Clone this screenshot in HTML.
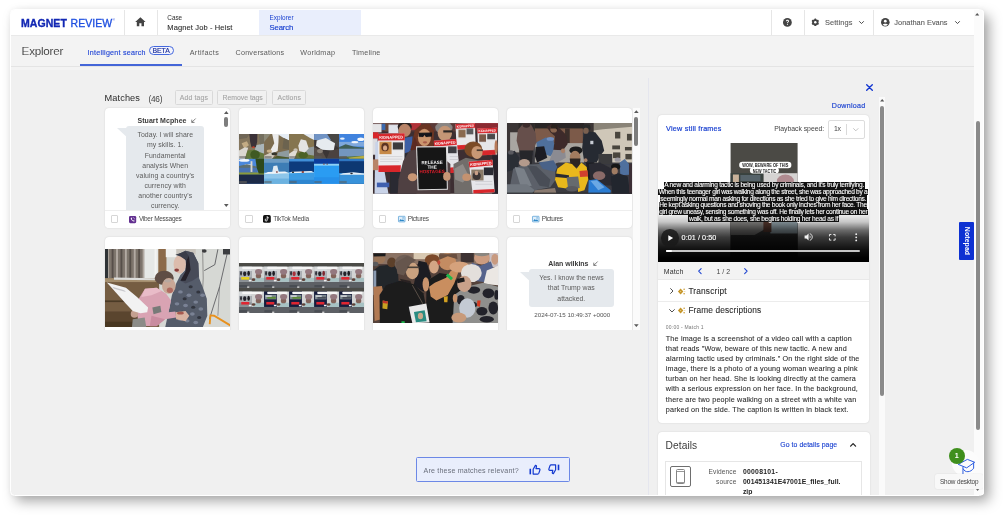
<!DOCTYPE html>
<html lang="en"><head><meta charset="utf-8"><title>Magnet Review - Explorer Search</title>
<style>
html,body{margin:0;padding:0}
body{background:#fff;width:1005px;height:517px;overflow:hidden;position:relative;font-family:"Liberation Sans",sans-serif}
#win{position:absolute;left:10.5px;top:9.5px;width:973.0px;height:485.8px;background:#f0f0f0;border-radius:3px;overflow:hidden;z-index:2}
#shadow{position:absolute;left:10.5px;top:9.5px;width:973.0px;height:485.8px;border-radius:3px;background:#fff;box-shadow:5px 6px 13px rgba(0,0,0,.36),0 0 6px rgba(0,0,0,.06);z-index:1}
#org{will-change:transform;position:absolute;left:-10.5px;top:-9.5px;width:1005px;height:517px}
.t{position:absolute;white-space:nowrap;margin:0;padding:0}
.b{position:absolute;box-sizing:border-box}
.card{position:absolute;box-sizing:border-box;background:#fff;border-radius:4px;box-shadow:0 0 1.5px rgba(0,0,0,.18);overflow:hidden}
svg{position:absolute;overflow:visible}
.clip{position:absolute;overflow:hidden}
#rim{position:absolute;left:9.5px;top:8.5px;width:974.9px;height:487.7px;box-sizing:border-box;border:1.6px solid #fff;border-radius:4.5px;z-index:3;pointer-events:none}

</style></head>
<body>
<div id="shadow"></div>
<div id="win"><div id="org">
<div class="b" style="left:10.50px;top:9.50px;width:973.50px;height:26.50px;background:#fff;border-bottom:1px solid #e9e9e9"></div>
<div class="b" style="left:123.90px;top:9.50px;width:1.00px;height:25.50px;background:#e6e6e6"></div>
<div class="b" style="left:156.50px;top:9.50px;width:1.00px;height:25.50px;background:#e6e6e6"></div>
<div class="b" style="left:770.70px;top:9.50px;width:1.00px;height:25.50px;background:#e6e6e6"></div>
<div class="b" style="left:803.60px;top:9.50px;width:1.00px;height:25.50px;background:#e6e6e6"></div>
<div class="b" style="left:873.00px;top:9.50px;width:1.00px;height:25.50px;background:#e6e6e6"></div>
<div class="b" style="left:259.20px;top:9.50px;width:101.90px;height:25.50px;background:#e9eefc"></div>
<svg style="left:134.60px;top:17.00px;" width="10.80" height="9.60" viewBox="0 0 24 21"><path d="M12 0.5 L0.5 11 H4 V20.5 H9.6 V13.6 H14.4 V20.5 H20 V11 H23.5 Z" fill="#444"/></svg>
<svg style="left:782.90px;top:18.10px;" width="8.80" height="8.80" viewBox="0 0 20 20"><circle cx="10" cy="10" r="10" fill="#444"/><path d="M6.6 7.6 C6.6 5.4 8.1 4.2 10.1 4.2 C12.1 4.2 13.5 5.4 13.5 7.2 C13.5 9.6 10.9 9.7 10.9 12.2 H9.1 C9.1 9.2 11.5 9 11.5 7.3 C11.5 6.5 10.9 6 10.1 6 C9.2 6 8.6 6.6 8.6 7.6 Z" fill="#fff"/><circle cx="10" cy="14.8" r="1.25" fill="#fff"/></svg>
<svg style="left:810.80px;top:18.30px;" width="8.60" height="8.60" viewBox="0 0 20 20"><rect x="7.9" y="1.2" width="4.2" height="17.6" rx="0.9" transform="rotate(0 10 10)" fill="#444"/><rect x="7.9" y="1.2" width="4.2" height="17.6" rx="0.9" transform="rotate(60 10 10)" fill="#444"/><rect x="7.9" y="1.2" width="4.2" height="17.6" rx="0.9" transform="rotate(120 10 10)" fill="#444"/><circle cx="10" cy="10" r="7.2" fill="#444"/><circle cx="10" cy="10" r="2.9" fill="#fff"/></svg>
<svg style="left:859.40px;top:21.10px;" width="5.00" height="3.10" viewBox="0 0 10 6"><path d="M1 1 L5 5 L9 1" fill="none" stroke="#4a4a4a" stroke-width="2" stroke-linecap="round" stroke-linejoin="round"/></svg>
<svg style="left:880.50px;top:18.30px;" width="8.60" height="8.60" viewBox="0 0 20 20"><circle cx="10" cy="10" r="10" fill="#444"/><circle cx="10" cy="7.4" r="3.2" fill="#fff"/><path d="M4 15.2 C5.6 12.4 14.4 12.4 16 15.2 C14.4 17.2 12.4 18 10 18 C7.6 18 5.6 17.2 4 15.2 Z" fill="#fff"/></svg>
<svg style="left:954.50px;top:21.10px;" width="5.00" height="3.10" viewBox="0 0 10 6"><path d="M1 1 L5 5 L9 1" fill="none" stroke="#4a4a4a" stroke-width="2" stroke-linecap="round" stroke-linejoin="round"/></svg>
<div class="b" style="left:10.50px;top:36.00px;width:963.70px;height:30.90px;background:#f3f3f3;border-bottom:1px solid #e4e4e4"></div>
<div class="b" style="left:148.50px;top:45.50px;width:25.30px;height:9.90px;border:0.9px solid #4468de;border-radius:5px;background:#f3f4fc"></div>
<div class="b" style="left:79.80px;top:64.00px;width:101.80px;height:2.00px;background:#4466d8"></div>
<div class="b" style="left:10.50px;top:66.90px;width:963.70px;height:2.70px;background:#f3f3f3"></div>
<div class="b" style="left:648.20px;top:77.50px;width:1.00px;height:418.50px;background:#e5e6ee"></div>
<div class="b" style="left:878.70px;top:96.50px;width:6.60px;height:399.50px;background:#fafafa"></div>
<div class="b" style="left:879.70px;top:106.00px;width:4.20px;height:290.20px;background:#8a8a8a;border-radius:2.2px"></div>
<svg style="left:879.60px;top:99.20px;" width="4.40" height="2.60" viewBox="0 0 8 5"><path d="M0 5 L4 0 L8 5 Z" fill="#555"/></svg>
<div class="b" style="left:974.20px;top:9.50px;width:9.80px;height:486.50px;background:#fbfbfb"></div>
<div class="b" style="left:976.00px;top:120.60px;width:4.00px;height:309.70px;background:#8a8a8a;border-radius:2px"></div>
<svg style="left:975.40px;top:13.40px;" width="4.40" height="2.60" viewBox="0 0 8 5"><path d="M0 5 L4 0 L8 5 Z" fill="#555"/></svg>
<div class="b" style="left:959.00px;top:222.20px;width:15.20px;height:37.70px;background:#0d31d2;border-radius:1px"></div>
<span class="t" style="left:966.6px;top:241.2px;font-size:6.9px;line-height:8px;color:#fff;font-weight:700;transform:translate(-50%,-50%) rotate(90deg);letter-spacing:0.1px">Notepad</span>
<div class="b" style="left:174.50px;top:90.40px;width:38.40px;height:15.00px;border:1px solid #d9d9d9;border-radius:1.5px;background:#f1f1f1"></div>
<div class="b" style="left:217.20px;top:90.40px;width:50.20px;height:15.00px;border:1px solid #d9d9d9;border-radius:1.5px;background:#f1f1f1"></div>
<div class="b" style="left:272.40px;top:90.40px;width:33.40px;height:15.00px;border:1px solid #d9d9d9;border-radius:1.5px;background:#f1f1f1"></div>
<div class="card" style="left:104.60px;top:107.90px;width:125.30px;height:120.10px;"></div>
<div class="card" style="left:104.60px;top:236.80px;width:125.30px;height:105.20px;"></div>
<div class="card" style="left:238.90px;top:107.90px;width:125.40px;height:120.10px;"></div>
<div class="card" style="left:238.90px;top:236.80px;width:125.40px;height:105.20px;"></div>
<div class="card" style="left:372.70px;top:107.90px;width:125.70px;height:120.10px;"></div>
<div class="card" style="left:372.70px;top:236.80px;width:125.70px;height:105.20px;"></div>
<div class="card" style="left:506.70px;top:107.90px;width:125.40px;height:120.10px;"></div>
<div class="card" style="left:506.70px;top:236.80px;width:125.40px;height:105.20px;"></div>
<svg style="left:239.00px;top:134.20px;overflow:hidden" width="125.10" height="49.70" viewBox="0 0 125.10 49.70"><defs><filter id="fA" x="-5%" y="-5%" width="110%" height="110%"><feGaussianBlur stdDeviation="0.6"/></filter></defs><g filter="url(#fA)"><rect x="0.00" y="0.00" width="25.10" height="24.97" fill="#85765d" /><polygon points="0.00,0.00 10.51,0.00 7.88,3.94 0.00,5.26" fill="#6f6656" /><polygon points="2.63,9.20 7.88,7.23 9.86,11.17 5.26,14.45" fill="#c3ab84" /><polygon points="16.43,11.17 25.10,9.46 25.10,19.71 15.77,19.71" fill="#aab5b9" /><polygon points="19.71,0.00 25.10,0.00 25.10,9.20 21.02,10.51" fill="#75705f" /><polygon points="0.00,16.43 5.91,13.14 9.20,13.80 5.91,24.97 0.00,24.97" fill="#dbd8d2" /><polygon points="5.91,24.97 8.54,16.43 14.45,15.77 25.10,19.71 25.10,24.97" fill="#62783a" /><ellipse cx="16.03" cy="20.76" rx="4.73" ry="4.47" fill="#3f5a22" /><polygon points="10.25,0.00 18.40,0.00 18.13,7.88 16.82,13.14 12.48,13.14 11.17,7.88" fill="#3a3137" /><ellipse cx="14.45" cy="13.14" rx="1.31" ry="0.92" fill="#c8402a" /><rect x="25.02" y="0.00" width="25.10" height="24.97" fill="#7c6c50" /><polygon points="38.16,0.00 50.12,0.00 50.12,6.57 44.73,3.94" fill="#e6edf5" /><polygon points="44.73,3.94 50.12,6.57 50.12,15.77 43.42,14.45" fill="#6c6350" /><polygon points="25.02,0.00 31.59,0.00 25.02,7.88" fill="#8d8a78" /><polygon points="38.82,18.40 50.12,16.03 50.12,23.39 37.50,23.92" fill="#8e9b9e" /><polygon points="25.02,21.68 31.59,18.40 36.85,19.71 32.90,24.97 25.02,24.97" fill="#cfc9bc" /><polygon points="32.90,24.97 38.16,21.68 50.12,23.39 50.12,24.97" fill="#4f5a2c" /><polygon points="33.17,0.00 39.74,0.00 39.47,7.88 38.69,17.08 32.90,19.71 31.59,15.77 35.27,9.20" fill="#ececec" /><ellipse cx="35.27" cy="19.71" rx="2.89" ry="1.58" fill="#34342c" /><ellipse cx="30.28" cy="17.08" rx="2.63" ry="1.58" fill="#c9b088" /><rect x="50.04" y="0.00" width="25.10" height="24.97" fill="#85744f" /><polygon points="64.49,0.00 75.14,0.00 75.14,5.91 71.06,3.94" fill="#e4ebf4" /><polygon points="64.49,14.45 75.14,12.48 75.14,21.68 63.18,22.34" fill="#939c9e" /><polygon points="50.04,19.71 55.95,15.77 58.58,16.43 55.30,24.97 50.04,24.97" fill="#e0dcd4" /><polygon points="55.30,24.97 58.19,18.40 75.14,21.68 75.14,24.97" fill="#667034" /><ellipse cx="64.23" cy="21.02" rx="4.73" ry="3.68" fill="#4c6226" /><polygon points="61.87,5.26 67.12,6.57 69.75,14.45 65.81,18.40 60.29,17.08 59.24,11.83" fill="#e3e3e3" /><ellipse cx="56.61" cy="15.77" rx="2.10" ry="1.58" fill="#c9c2b4" /><rect x="75.06" y="0.00" width="25.10" height="24.97" fill="#3b3634" /><polygon points="75.06,0.00 100.16,0.00 100.16,6.57 75.06,5.91" fill="#6f93c4" /><polygon points="88.20,0.00 100.16,0.00 100.16,14.45 94.77,10.51" fill="#4a4644" /><polygon points="77.69,6.57 86.89,3.94 96.08,9.20 94.77,16.43 82.94,15.77 77.03,11.83" fill="#e6ebef" /><polygon points="75.06,13.14 82.94,16.43 87.54,24.97 75.06,24.97" fill="#59504a" /><polygon points="87.54,24.97 90.83,17.08 100.16,14.45 100.16,24.97" fill="#4b433f" /><ellipse cx="80.97" cy="17.08" rx="2.89" ry="2.10" fill="#8a8178" /><rect x="100.08" y="0.00" width="25.10" height="24.97" fill="#3f83de" /><rect x="100.08" y="7.88" width="25.10" height="4.60" fill="#7fa8dc" /><ellipse cx="121.76" cy="5.26" rx="3.42" ry="1.84" fill="#f4f7fb" /><ellipse cx="103.36" cy="4.60" rx="2.37" ry="1.18" fill="#e8effa" /><ellipse cx="115.85" cy="8.15" rx="3.42" ry="1.05" fill="#f0f4fa" /><polygon points="100.08,13.14 106.65,10.25 114.53,12.48 125.18,13.80 125.18,17.08 100.08,15.51" fill="#3f5f57" /><rect x="100.08" y="14.72" width="25.10" height="8.28" fill="#7396bf" /><polygon points="100.08,23.00 125.18,21.68 125.18,24.97 100.08,24.97" fill="#55713a" /><polygon points="109.28,23.65 125.18,21.68 125.18,24.97 110.59,24.97" fill="#b7ae42" /><rect x="100.08" y="22.60" width="7.88" height="2.37" fill="#5d5f50" /><rect x="0.00" y="24.84" width="25.10" height="24.97" fill="#4b88dc" /><ellipse cx="5.26" cy="26.41" rx="5.26" ry="1.31" fill="#f4f7fb" /><ellipse cx="9.20" cy="31.41" rx="3.94" ry="1.05" fill="#eaf1fb" /><polygon points="0.00,32.06 7.88,30.35 18.40,32.72 18.40,35.35 0.00,35.35" fill="#5e6f70" /><rect x="0.00" y="33.77" width="18.40" height="5.26" fill="#4a73b2" /><rect x="0.00" y="38.50" width="25.10" height="2.37" fill="#8b9b3c" /><rect x="0.00" y="40.60" width="25.10" height="9.20" fill="#1c2a46" /><rect x="11.56" y="27.20" width="1.84" height="10.78" fill="#d8d5cc" /><polygon points="16.43,24.84 25.10,24.84 25.10,39.55 19.71,39.55 17.74,34.03" fill="#2e4a1c" /><rect x="0.00" y="47.17" width="7.88" height="2.63" fill="#39404e" /><rect x="25.02" y="24.84" width="25.10" height="24.97" fill="#3d7db5" /><rect x="25.02" y="24.84" width="25.10" height="3.94" fill="#6d9cc4" /><rect x="25.02" y="38.63" width="25.10" height="11.17" fill="#8dc6ea" /><rect x="25.02" y="44.55" width="25.10" height="5.26" fill="#6cb2e0" /><polygon points="34.48,32.06 38.16,31.41 40.13,39.29 32.90,39.55" fill="#dfeaf2" /><polygon points="28.96,37.98 46.04,37.45 50.12,39.29 25.02,40.08" fill="#eef4f8" /><ellipse cx="37.90" cy="37.98" rx="1.05" ry="0.79" fill="#7a3030" /><rect x="50.04" y="24.84" width="25.10" height="24.97" fill="#0f3b7c" /><rect x="50.04" y="24.84" width="25.10" height="2.63" fill="#3f8fd8" /><rect x="50.04" y="37.98" width="25.10" height="11.83" fill="#3a9be4" /><rect x="50.04" y="45.86" width="25.10" height="3.94" fill="#2d86d0" /><polygon points="52.67,37.71 72.38,36.93 75.14,38.50 50.04,39.29" fill="#e8f0f6" /><ellipse cx="63.84" cy="37.98" rx="1.31" ry="0.92" fill="#8a3a32" /><ellipse cx="53.98" cy="38.24" rx="1.18" ry="0.79" fill="#202020" /><rect x="75.06" y="24.84" width="25.10" height="24.97" fill="#2c9cf2" /><rect x="75.06" y="24.84" width="25.10" height="4.99" fill="#0c3d9c" /><rect x="75.06" y="29.83" width="25.10" height="1.84" fill="#8ed0f4" /><rect x="75.06" y="43.23" width="25.10" height="6.57" fill="#2890ea" /><ellipse cx="84.91" cy="30.09" rx="1.05" ry="0.53" fill="#8a4034" /><ellipse cx="88.20" cy="30.09" rx="0.79" ry="0.53" fill="#6a3030" /><rect x="100.08" y="24.84" width="25.10" height="24.97" fill="#0d3772" /><rect x="100.08" y="24.84" width="25.10" height="2.37" fill="#2f77c2" /><rect x="100.08" y="39.03" width="25.10" height="10.78" fill="#3792da" /><polygon points="104.02,39.29 114.53,38.24 125.18,39.55 125.18,40.87 100.08,40.87" fill="#e4edf4" /><ellipse cx="112.56" cy="39.55" rx="1.31" ry="0.79" fill="#2a2a30" /><rect x="0.26" y="22.08" width="7.36" height="2.37" fill="#5a5a5a" opacity="0.55"/><rect x="0.26" y="46.91" width="7.36" height="2.37" fill="#5a5a5a" opacity="0.55"/><rect x="25.28" y="22.08" width="7.36" height="2.37" fill="#5a5a5a" opacity="0.55"/><rect x="25.28" y="46.91" width="7.36" height="2.37" fill="#5a5a5a" opacity="0.55"/><rect x="50.30" y="22.08" width="7.36" height="2.37" fill="#5a5a5a" opacity="0.55"/><rect x="50.30" y="46.91" width="7.36" height="2.37" fill="#5a5a5a" opacity="0.55"/><rect x="75.32" y="22.08" width="7.36" height="2.37" fill="#5a5a5a" opacity="0.55"/><rect x="75.32" y="46.91" width="7.36" height="2.37" fill="#5a5a5a" opacity="0.55"/><rect x="100.34" y="22.08" width="7.36" height="2.37" fill="#5a5a5a" opacity="0.55"/><rect x="100.34" y="46.91" width="7.36" height="2.37" fill="#5a5a5a" opacity="0.55"/></g></svg>
<svg style="left:373.10px;top:123.40px;overflow:hidden" width="124.90" height="70.50" viewBox="0 0 124.90 70.50"><defs><filter id="fB" x="-5%" y="-5%" width="110%" height="110%"><feGaussianBlur stdDeviation="0.4"/></filter></defs><g filter="url(#fB)"><rect x="0.00" y="0.00" width="125.39" height="70.74" fill="#3c2f30" /><rect x="0.00" y="0.00" width="125.39" height="8.51" fill="#5a3a38" /><rect x="34.06" y="0.00" width="13.93" height="6.97" fill="#b03038" /><rect x="97.52" y="0.00" width="27.86" height="6.19" fill="#8a2a30" /><ellipse cx="13.93" cy="3.87" rx="4.33" ry="4.64" fill="#6a4638" /><rect x="8.51" y="0.77" width="3.87" height="6.19" fill="#3a6ab0" /><rect x="0.00" y="0.77" width="8.51" height="8.51" fill="#e4e4e6" /><rect x="0.00" y="9.29" width="5.42" height="6.19" fill="#d8262c" /><rect x="0.00" y="15.48" width="4.64" height="16.25" fill="#dcdce0" /><rect x="15.48" y="1.55" width="10.06" height="8.51" fill="#dfe2ea" /><ellipse cx="31.73" cy="3.87" rx="7.12" ry="5.57" fill="#2a2220" /><ellipse cx="31.73" cy="7.28" rx="6.19" ry="6.50" fill="#b98468" /><polygon points="31.73,14.71 39.47,13.16 39.47,27.86 31.73,30.19" fill="#3c5fa4" /><rect x="17.03" y="30.19" width="26.32" height="40.56" fill="#2c2a30" /><polygon points="2.32,19.35 6.19,17.80 15.48,70.74 1.55,70.74" fill="#c9d3e8" /><rect x="3.87" y="59.60" width="12.38" height="4.64" fill="#3f5fae" /><rect x="0.00" y="36.38" width="6.19" height="10.84" fill="#b88468" /><polygon points="4.95,10.84 31.73,10.37 31.27,48.76 5.42,49.07" fill="#ececee" /><polygon points="4.95,10.84 31.73,10.37 31.73,17.18 4.95,17.49" fill="#d8262c" /><rect x="6.50" y="18.73" width="12.07" height="12.38" fill="#c78a48" /><ellipse cx="12.07" cy="23.99" rx="3.72" ry="4.33" fill="#5a3220" /><ellipse cx="12.07" cy="24.92" rx="2.17" ry="2.63" fill="#d9a888" /><rect x="19.81" y="19.35" width="10.22" height="7.12" fill="#3a3a3c" /><rect x="7.12" y="33.28" width="22.29" height="0.62" fill="#c8c8cc" /><rect x="7.12" y="35.76" width="22.29" height="0.62" fill="#c8c8cc" /><rect x="7.12" y="38.24" width="19.20" height="0.62" fill="#c8c8cc" /><polygon points="5.42,42.57 27.86,42.26 27.55,49.07 5.42,49.07" fill="#d8262c" /><ellipse cx="70.90" cy="4.80" rx="8.67" ry="6.19" fill="#8a8684" /><ellipse cx="71.83" cy="10.37" rx="7.12" ry="7.74" fill="#c49676" /><rect x="70.28" y="7.28" width="9.29" height="2.17" fill="#2a2424" /><polygon points="63.47,17.80 80.50,16.25 83.59,25.54 63.47,25.54" fill="#2c2628" /><polygon points="82.51,1.08 101.86,0.15 102.79,25.54 83.59,26.47" fill="#e8e8ea" /><polygon points="82.51,1.08 101.86,0.15 102.17,4.80 82.82,5.73" fill="#d8262c" /><rect x="85.45" y="6.66" width="7.12" height="7.74" fill="#8a6a50" /><rect x="93.50" y="5.42" width="6.81" height="5.88" fill="#5a5a5c" /><polygon points="83.90,22.14 102.48,21.21 102.79,25.54 84.06,26.47" fill="#d8262c" /><polygon points="104.33,5.42 124.15,4.80 124.15,31.73 105.26,32.35" fill="#e6e6e8" /><polygon points="104.33,5.42 124.15,4.80 124.15,9.75 104.49,10.37" fill="#d8262c" /><rect x="106.19" y="11.30" width="6.81" height="7.43" fill="#7a5a48" /><rect x="114.24" y="10.68" width="7.74" height="5.57" fill="#4a4a4c" /><polygon points="108.36,27.40 122.60,26.78 122.60,31.73 108.67,32.35" fill="#d8262c" /><ellipse cx="123.07" cy="23.99" rx="1.55" ry="6.97" fill="#b87a58" /><polygon points="60.68,17.80 83.59,15.94 86.69,49.07 63.78,50.31" fill="#e4e4e8" /><polygon points="60.37,17.80 83.28,15.94 83.90,21.83 60.99,23.68" fill="#d8262c" /><rect x="75.08" y="23.37" width="8.51" height="6.81" fill="#3e3e42" /><rect x="76.63" y="33.28" width="8.51" height="0.62" fill="#c0c0c6" /><rect x="76.63" y="36.07" width="8.82" height="0.62" fill="#c0c0c6" /><polygon points="75.08,44.74 86.38,43.81 86.69,49.38 75.39,50.31" fill="#d8262c" /><rect x="80.50" y="43.50" width="4.02" height="3.41" fill="#8ab0b8" /><polygon points="41.80,6.97 47.99,1.55 56.50,1.08 61.15,7.74 60.37,23.99 55.73,30.19 43.34,30.96 37.46,27.09" fill="#6a3424" /><polygon points="37.46,27.09 41.80,13.16 46.44,27.09 43.34,34.83" fill="#5c2c20" /><ellipse cx="51.39" cy="14.40" rx="6.50" ry="8.67" fill="#cc966e" /><polygon points="45.51,9.75 59.13,9.44 58.82,13.47 52.94,14.09 51.39,11.92 50.15,14.09 45.82,13.78" fill="#16151a" /><ellipse cx="52.01" cy="19.35" rx="2.17" ry="1.08" fill="#a85a4a" /><polygon points="36.38,27.86 47.99,25.54 61.92,27.86 77.40,41.02 77.40,70.74 24.77,70.74 25.54,56.50 30.19,37.93" fill="#4f4042" /><polygon points="80.50,41.02 92.88,34.83 108.36,37.93 105.26,70.74 81.27,70.74" fill="#716d6b" /><polygon points="81.27,45.67 89.78,41.02 95.98,53.41 89.78,59.60 82.04,56.50" fill="#8f8b88" /><ellipse cx="100.31" cy="26.32" rx="8.98" ry="7.74" fill="#7b4b28" /><ellipse cx="104.02" cy="29.41" rx="5.57" ry="6.50" fill="#c99874" /><rect x="103.72" y="26.32" width="6.19" height="1.70" fill="#4a3a30" /><rect x="119.20" y="31.73" width="6.19" height="39.01" fill="#26242a" /><polygon points="95.67,38.70 119.50,36.69 121.67,69.20 99.69,70.43" fill="#e6e6ea" /><polygon points="95.67,38.70 119.50,36.69 119.81,42.26 96.28,44.43" fill="#d8262c" /><rect x="98.30" y="46.59" width="12.23" height="10.84" fill="#8a7a68" /><ellipse cx="103.72" cy="53.10" rx="4.02" ry="4.02" fill="#3a3436" /><ellipse cx="103.41" cy="50.00" rx="1.86" ry="2.17" fill="#c8a088" /><rect x="110.84" y="44.43" width="9.29" height="7.74" fill="#2c2c30" /><rect x="102.17" y="58.05" width="17.03" height="0.62" fill="#c4c4ca" /><rect x="102.48" y="60.84" width="17.03" height="0.62" fill="#c4c4ca" /><polygon points="100.31,67.03 121.36,66.10 121.67,69.20 100.31,70.43" fill="#d8262c" /><polygon points="43.03,23.37 73.99,23.07 74.92,66.72 44.58,67.34" fill="#dcdcdc" /><polygon points="44.12,24.46 72.91,24.15 73.84,65.63 45.67,66.25" fill="#121214" /><ellipse cx="39.47" cy="54.18" rx="4.64" ry="4.02" fill="#c89674" /><ellipse cx="73.84" cy="53.41" rx="3.72" ry="4.33" fill="#c89674" /><ellipse cx="93.65" cy="54.18" rx="4.33" ry="3.72" fill="#c49270" /><text x="59.13" y="41.02" font-size="4.8" font-weight="700" fill="#f2f2f2" text-anchor="middle" font-family="Liberation Sans, sans-serif" textLength="21.5" lengthAdjust="spacingAndGlyphs" transform="rotate(-1 59.13 41.02)">RELEASE</text><text x="59.13" y="45.67" font-size="4.8" font-weight="700" fill="#f2f2f2" text-anchor="middle" font-family="Liberation Sans, sans-serif" textLength="9.5" lengthAdjust="spacingAndGlyphs" transform="rotate(-1 59.13 45.67)">THE</text><text x="59.13" y="50.15" font-size="4.8" font-weight="700" fill="#e0202c" text-anchor="middle" font-family="Liberation Sans, sans-serif" textLength="25.5" lengthAdjust="spacingAndGlyphs" transform="rotate(-1 59.13 50.15)">HOSTAGES</text><text x="18.27" y="15.63" font-size="3.9" font-weight="700" fill="#fff" text-anchor="middle" font-family="Liberation Sans, sans-serif" textLength="24" lengthAdjust="spacingAndGlyphs" transform="rotate(-1 18.27 15.63)">KIDNAPPED</text><text x="72.14" y="21.21" font-size="3.7" font-weight="700" fill="#fff" text-anchor="middle" font-family="Liberation Sans, sans-serif" textLength="21" lengthAdjust="spacingAndGlyphs" transform="rotate(-4 72.14 21.21)">KIDNAPPED</text><text x="92.41" y="4.18" font-size="3.3" font-weight="700" fill="#fff" text-anchor="middle" font-family="Liberation Sans, sans-serif" textLength="17.5" lengthAdjust="spacingAndGlyphs" transform="rotate(-3 92.41 4.18)">KIDNAPPED</text><text x="114.24" y="8.82" font-size="3.3" font-weight="700" fill="#fff" text-anchor="middle" font-family="Liberation Sans, sans-serif" textLength="17.5" lengthAdjust="spacingAndGlyphs" transform="rotate(-2 114.24 8.82)">KIDNAPPED</text><text x="107.89" y="42.11" font-size="3.8" font-weight="700" fill="#fff" text-anchor="middle" font-family="Liberation Sans, sans-serif" textLength="21.5" lengthAdjust="spacingAndGlyphs" transform="rotate(-5 107.89 42.11)">KIDNAPPED</text></g></svg>
<svg style="left:507.10px;top:123.40px;overflow:hidden" width="124.90" height="70.50" viewBox="0 0 124.90 70.50"><defs><filter id="fC" x="-5%" y="-5%" width="110%" height="110%"><feGaussianBlur stdDeviation="0.55"/></filter></defs><g filter="url(#fC)"><rect x="0.00" y="0.00" width="125.39" height="70.74" fill="#3a3a40" /><rect x="0.00" y="0.00" width="12.38" height="30.19" fill="#3b3634" /><rect x="3.10" y="9.29" width="9.29" height="20.12" fill="#a9a6a2" /><rect x="11.61" y="0.00" width="18.58" height="11.61" fill="#2e2a2a" /><rect x="27.86" y="0.77" width="47.99" height="20.12" fill="#7c5a48" /><rect x="27.86" y="0.00" width="49.54" height="5.42" fill="#2c2726" /><rect x="58.05" y="5.42" width="4.64" height="14.71" fill="#3a2e2a" /><rect x="27.86" y="20.12" width="49.54" height="19.35" fill="#a8a49e" /><polygon points="85.91,5.42 125.39,0.77 125.39,39.47 86.69,39.47" fill="#cfc7b8" /><polygon points="83.59,0.00 125.39,0.00 125.39,3.87 95.98,6.19 84.37,7.74" fill="#8a8478" /><rect x="77.40" y="0.00" width="9.29" height="13.16" fill="#3a3634" /><rect x="108.05" y="8.82" width="5.26" height="6.66" fill="#4a443e" /><rect x="119.97" y="10.84" width="4.80" height="6.66" fill="#4a443e" /><rect x="105.26" y="22.45" width="7.74" height="3.87" fill="#4a443e" /><rect x="117.96" y="23.99" width="6.81" height="3.41" fill="#4a443e" /><rect x="106.04" y="29.41" width="7.28" height="5.73" fill="#4a443e" /><rect x="118.42" y="30.96" width="6.35" height="5.42" fill="#4a443e" /><rect x="87.46" y="14.71" width="2.32" height="3.10" fill="#5a544e" /><polygon points="10.84,6.97 15.48,1.55 23.99,1.55 28.64,10.06 29.41,19.35 26.32,27.86 12.38,27.86 9.60,17.80" fill="#66504b" /><ellipse cx="19.35" cy="2.32" rx="3.72" ry="2.48" fill="#3a2c2a" /><polygon points="12.38,27.40 26.01,27.40 24.77,41.02 13.93,41.02" fill="#26262a" /><polygon points="29.41,19.35 38.70,14.40 46.44,16.25 47.99,27.86 43.34,33.28 30.19,27.86" fill="#4f6f9c" /><ellipse cx="43.34" cy="15.94" rx="3.72" ry="1.86" fill="#6f8fc0" /><polygon points="28.64,23.99 37.15,23.22 40.25,34.83 30.19,39.47 27.86,33.28" fill="#1e1e22" /><polygon points="39.47,3.87 44.89,1.08 50.31,3.10 58.82,11.61 60.68,20.90 55.73,27.86 46.44,27.09 47.99,13.16 43.34,9.29" fill="#3d2c29" /><ellipse cx="46.75" cy="6.19" rx="3.41" ry="3.41" fill="#8a6650" /><polygon points="44.89,1.08 50.31,2.32 51.08,7.74 48.76,5.42 43.34,5.42" fill="#2a201e" /><polygon points="46.44,26.78 58.05,27.40 58.82,34.83 47.99,41.02 41.80,39.47" fill="#8b8b92" /><ellipse cx="56.04" cy="27.86" rx="2.17" ry="2.48" fill="#a88068" /><polygon points="76.63,11.61 80.50,8.51 88.24,9.29 94.74,17.80 97.21,27.86 92.88,33.28 89.78,39.47 77.40,39.47 75.08,25.54" fill="#272b33" /><ellipse cx="79.72" cy="4.64" rx="4.02" ry="3.41" fill="#2c2c2c" /><ellipse cx="78.95" cy="7.74" rx="2.79" ry="3.10" fill="#7a6050" /><rect x="83.28" y="17.80" width="3.10" height="3.41" fill="#c8ccd4" /><polygon points="78.95,39.16 87.46,39.16 86.69,56.50 80.50,56.50" fill="#1c1e24" /><ellipse cx="78.64" cy="37.15" rx="1.86" ry="1.86" fill="#a88068" /><rect x="91.33" y="30.96" width="13.93" height="10.06" fill="#3a3a3e" /><polygon points="0.00,29.41 7.74,27.86 12.38,34.83 10.84,45.67 0.00,48.76" fill="#2c2e36" /><ellipse cx="3.87" cy="29.41" rx="2.79" ry="2.17" fill="#5a5a60" /><polygon points="6.19,45.67 17.03,41.80 32.51,41.02 47.99,45.67 48.76,56.50 43.34,64.24 27.86,67.34 10.84,68.89 3.10,62.69" fill="#5b6169" /><polygon points="31.73,39.47 46.44,37.15 50.31,44.12 47.99,48.76 35.60,45.67" fill="#4a6288" /><ellipse cx="17.34" cy="39.78" rx="5.57" ry="3.72" fill="#b39a8c" /><polygon points="7.74,44.12 17.03,45.67 24.77,62.69 13.93,64.24" fill="#7a8088" /><polygon points="0.00,61.15 20.12,61.15 27.86,67.34 24.77,70.74 0.00,70.74" fill="#70767e" /><polygon points="27.86,67.34 47.99,65.02 49.54,70.74 26.32,70.74" fill="#8a7a70" /><polygon points="20.12,42.57 29.41,43.34 43.34,56.50 41.80,64.24 32.51,62.69" fill="#4a4e56" /><ellipse cx="68.89" cy="27.40" rx="6.50" ry="4.02" fill="#1c1a1a" /><ellipse cx="68.11" cy="34.06" rx="5.26" ry="6.19" fill="#a37c5e" /><polygon points="62.69,35.60 73.53,35.60 72.76,42.57 68.11,44.89 63.47,41.80" fill="#2e2624" /><polygon points="50.31,45.67 58.82,39.47 65.02,41.02 69.66,45.67 74.30,39.47 79.72,44.12 81.27,56.50 77.40,67.34 71.21,68.89 69.66,59.60 61.92,59.60 61.15,65.79 51.08,64.24 47.99,56.50" fill="#e9b81a" /><polygon points="48.76,50.62 61.92,52.17 61.92,55.26 48.30,54.02" fill="#2b2b33" /><polygon points="72.45,47.99 80.50,47.21 81.11,53.41 73.07,54.02" fill="#d2412e" /><polygon points="59.60,54.18 71.21,53.41 72.76,65.02 61.15,65.79" fill="#666a6e" /><ellipse cx="65.02" cy="65.79" rx="6.19" ry="2.79" fill="#5a5a5e" /><polygon points="82.04,41.02 92.88,39.47 105.26,45.67 105.26,62.69 83.59,61.15" fill="#2c2c32" /><ellipse cx="92.11" cy="52.63" rx="6.19" ry="4.33" fill="#8a6a68" /><ellipse cx="110.68" cy="36.69" rx="3.10" ry="2.17" fill="#9a98a0" /><polygon points="112.69,39.47 117.65,36.07 121.98,41.02 122.60,51.86 113.31,52.17" fill="#4f6f9e" /><ellipse cx="108.67" cy="43.81" rx="4.64" ry="3.10" fill="#161616" /><ellipse cx="107.74" cy="47.99" rx="3.10" ry="3.41" fill="#a07c64" /><polygon points="103.72,53.41 111.46,50.31 120.74,53.41 123.07,70.74 105.26,70.74" fill="#23262e" /><rect x="121.98" y="41.02" width="3.41" height="29.72" fill="#3a2e34" /><polygon points="81.73,57.28 89.78,56.19 103.72,67.34 103.72,70.74 81.27,70.74" fill="#2b7bd2" /><polygon points="83.59,58.05 89.78,57.28 97.52,64.24 91.33,67.34" fill="#6aa8e4" /><rect x="0.00" y="69.66" width="125.39" height="1.08" fill="#2a2a2e" /></g></svg>
<svg style="left:104.60px;top:248.80px;overflow:hidden" width="125.30" height="78.10" viewBox="0 0 125.30 78.10"><defs><filter id="fD" x="-5%" y="-5%" width="110%" height="110%"><feGaussianBlur stdDeviation="0.5"/></filter></defs><g filter="url(#fD)"><rect x="0.00" y="0.00" width="125.66" height="78.67" fill="#d6d8d4" /><rect x="0.00" y="0.00" width="40.01" height="29.29" fill="#7d746c" /><rect x="2.21" y="0.00" width="1.87" height="28.95" fill="#b2aaa2" /><rect x="6.64" y="0.00" width="1.87" height="28.95" fill="#57504a" /><rect x="11.07" y="0.00" width="1.87" height="28.95" fill="#b2aaa2" /><rect x="15.49" y="0.00" width="1.87" height="28.95" fill="#57504a" /><rect x="19.92" y="0.00" width="1.87" height="28.95" fill="#b2aaa2" /><rect x="24.35" y="0.00" width="1.87" height="28.95" fill="#57504a" /><rect x="28.78" y="0.00" width="1.87" height="28.95" fill="#b2aaa2" /><rect x="33.20" y="0.00" width="1.87" height="28.95" fill="#57504a" /><rect x="37.63" y="0.00" width="1.87" height="28.95" fill="#b2aaa2" /><rect x="0.00" y="0.00" width="3.06" height="29.29" fill="#2f3134" /><rect x="39.33" y="0.00" width="14.81" height="29.29" fill="#e6e8e6" /><rect x="49.55" y="0.00" width="2.04" height="29.29" fill="#f4f4f2" /><rect x="53.29" y="0.00" width="8.17" height="30.14" fill="#8c6b49" /><rect x="60.79" y="0.00" width="10.56" height="8.17" fill="#f0f0ee" /><rect x="71.34" y="0.00" width="19.41" height="5.45" fill="#c9c4bc" /><rect x="0.00" y="29.29" width="54.15" height="49.38" fill="#755d43" /><rect x="0.00" y="29.29" width="54.15" height="3.75" fill="#a48e6e" /><rect x="0.00" y="51.42" width="37.97" height="1.70" fill="#4c3a28" /><rect x="0.00" y="62.49" width="37.97" height="16.18" fill="#5a452f" /><rect x="0.00" y="72.71" width="37.97" height="5.96" fill="#493723" /><polygon points="9.02,28.61 49.89,29.29 49.89,31.33 9.02,30.65" fill="#dcdcda" /><polyline points="97.57,0.00 98.25,29.29 97.22,46.31" fill="none" stroke="#9a9a98" stroke-width="1.19" /><polyline points="112.89,0.34 109.82,15.66 99.27,21.62" fill="none" stroke="#34343a" stroke-width="0.68" /><polyline points="122.77,2.04 114.59,37.80 104.38,70.15" fill="none" stroke="#3a3a40" stroke-width="0.68" /><polyline points="114.59,37.80 112.89,66.75" fill="none" stroke="#55555a" stroke-width="0.51" /><rect x="118.00" y="0.00" width="7.66" height="5.45" fill="#3a3c40" /><ellipse cx="99.27" cy="2.04" rx="2.38" ry="1.70" fill="#3a3a3e" /><polygon points="72.88,5.45 80.54,1.70 88.20,3.75 93.31,13.96 94.16,29.29 97.57,37.80 101.82,49.72 102.33,66.75 97.57,78.67 60.11,78.67 63.51,63.34 66.92,46.31 71.17,34.39 75.43,25.88 80.54,20.77 80.20,10.56" fill="#545b6b" /><polygon points="72.88,5.45 80.54,1.70 88.20,3.75 93.31,13.96 93.82,27.58 87.35,31.84 80.54,34.39 75.43,31.84 80.54,22.48 81.39,11.41" fill="#474b59" /><polygon points="78.84,5.45 83.94,7.15 85.65,20.77 80.54,31.84 75.43,31.84 80.54,22.48 81.39,11.41" fill="#25222a" /><ellipse cx="74.75" cy="15.32" rx="6.13" ry="9.19" fill="#dcbcac" /><ellipse cx="71.68" cy="21.11" rx="2.38" ry="1.53" fill="#8a3a38" /><polygon points="70.32,5.79 80.54,2.38 83.94,7.15 81.39,11.41 75.43,7.49" fill="#3a3c48" /><ellipse cx="75.43" cy="42.91" rx="2.38" ry="1.70" fill="#7a8294" /><ellipse cx="83.94" cy="46.31" rx="2.38" ry="1.70" fill="#7a8294" /><ellipse cx="90.75" cy="53.12" rx="2.38" ry="1.70" fill="#7a8294" /><ellipse cx="80.54" cy="56.53" rx="2.38" ry="1.70" fill="#7a8294" /><ellipse cx="87.35" cy="65.04" rx="2.38" ry="1.70" fill="#7a8294" /><ellipse cx="95.86" cy="59.94" rx="2.38" ry="1.70" fill="#7a8294" /><ellipse cx="75.43" cy="70.15" rx="2.38" ry="1.70" fill="#7a8294" /><ellipse cx="90.75" cy="73.56" rx="2.38" ry="1.70" fill="#7a8294" /><ellipse cx="97.57" cy="46.31" rx="2.38" ry="1.70" fill="#7a8294" /><ellipse cx="72.02" cy="54.83" rx="2.38" ry="1.70" fill="#7a8294" /><ellipse cx="82.24" cy="71.85" rx="2.38" ry="1.70" fill="#7a8294" /><ellipse cx="79.69" cy="49.72" rx="2.04" ry="1.53" fill="#30343e" /><ellipse cx="88.20" cy="58.23" rx="2.04" ry="1.53" fill="#30343e" /><ellipse cx="94.16" cy="68.45" rx="2.04" ry="1.53" fill="#30343e" /><ellipse cx="77.13" cy="63.34" rx="2.04" ry="1.53" fill="#30343e" /><ellipse cx="85.65" cy="37.80" rx="2.04" ry="1.53" fill="#30343e" /><ellipse cx="93.31" cy="42.91" rx="2.04" ry="1.53" fill="#30343e" /><ellipse cx="59.25" cy="28.95" rx="9.54" ry="7.15" fill="#5f4e44" /><ellipse cx="63.85" cy="36.95" rx="6.81" ry="7.83" fill="#c9a796" /><ellipse cx="64.87" cy="41.21" rx="3.06" ry="2.72" fill="#b06a60" /><ellipse cx="62.66" cy="31.84" rx="3.41" ry="1.70" fill="#b8a8a0" /><polygon points="40.01,39.84 51.59,38.65 60.96,44.61 66.07,51.42 63.51,63.34 70.32,62.49 71.17,68.45 60.11,70.15 51.59,76.96 33.71,76.96 32.01,63.34 33.71,49.72" fill="#d9a3b3" /><polygon points="40.01,39.84 51.59,38.65 56.70,42.06 46.48,46.31 36.27,48.02" fill="#e9bcc8" /><polygon points="47.34,58.57 55.34,56.87 56.36,63.00 48.53,65.38" fill="#777a78" /><polygon points="46.48,66.75 60.11,70.15 51.59,77.30 44.78,77.30" fill="#c98ca0" /><polygon points="70.32,63.34 80.54,61.98 84.28,66.75 80.54,72.19 71.17,70.15" fill="#dab4a2" /><ellipse cx="75.43" cy="64.19" rx="3.41" ry="1.36" fill="#a85a50" /><polygon points="27.75,70.15 39.67,68.45 41.38,78.67 26.90,78.67" fill="#8c8c88" /><ellipse cx="29.46" cy="65.04" rx="3.75" ry="3.75" fill="#c4a090" /><polygon points="1.87,33.54 20.94,38.65 32.01,48.02 43.08,58.57 42.23,63.34 35.42,64.19 27.75,61.98 20.94,54.83" fill="#f2f2f2" /><polygon points="7.32,37.80 19.24,41.21 20.94,42.91 9.02,39.84" fill="#c8c8cc" /><polyline points="104.72,75.26 105.40,66.41 109.14,66.75 125.66,76.62" fill="none" stroke="#e8901c" stroke-width="1.87" /><rect x="99.27" y="75.26" width="5.11" height="3.41" fill="#d8d8d4" /></g></svg>
<svg style="left:239.00px;top:262.80px;overflow:hidden" width="125.10" height="50.00" viewBox="0 0 125.10 50.00"><defs><filter id="fE" x="-5%" y="-5%" width="110%" height="110%"><feGaussianBlur stdDeviation="0.4"/></filter></defs><g filter="url(#fE)"><rect x="-1.00" y="-0.70" width="130.01" height="52.00" fill="#5d6065" /><rect x="-1.00" y="-0.70" width="130.01" height="4.55" fill="#4b4b46" /><rect x="-1.00" y="24.86" width="130.01" height="3.90" fill="#4b4b46" /><rect x="0.09" y="3.63" width="12.78" height="15.17" fill="#aeb2b7" /><rect x="0.09" y="3.63" width="12.78" height="4.33" fill="#d9dcde" /><rect x="0.09" y="14.46" width="12.78" height="4.33" fill="#898e93" /><ellipse cx="2.04" cy="10.35" rx="0.98" ry="2.38" fill="#33323a" /><ellipse cx="5.72" cy="10.78" rx="1.63" ry="2.38" fill="#232229" /><ellipse cx="9.62" cy="10.35" rx="1.30" ry="2.60" fill="#1d1c22" /><rect x="2.25" y="14.03" width="8.02" height="2.60" fill="#e6d01c" /><rect x="12.87" y="3.63" width="12.24" height="15.17" fill="#d3d4d4" /><polygon points="13.95,18.80 14.82,15.33 18.29,14.25 25.11,14.90 25.11,18.80" fill="#a7c2c3" /><ellipse cx="19.48" cy="12.73" rx="2.71" ry="2.60" fill="#83635a" /><ellipse cx="19.59" cy="8.83" rx="3.58" ry="2.82" fill="#94787f" /><ellipse cx="14.50" cy="16.63" rx="1.84" ry="1.30" fill="#5f4238" /><rect x="3.12" y="3.85" width="20.37" height="2.17" fill="#f6f6f6" rx="1"/><rect x="0.30" y="22.05" width="8.02" height="2.17" fill="#4a4d52" /><rect x="8.10" y="23.56" width="2.17" height="1.08" fill="#f2f2f2" /><rect x="9.84" y="16.85" width="2.60" height="1.52" fill="#f0f0f0" /><rect x="25.11" y="3.63" width="12.78" height="15.17" fill="#aeb2b7" /><rect x="25.11" y="3.63" width="12.78" height="4.33" fill="#d9dcde" /><rect x="25.11" y="14.46" width="12.78" height="4.33" fill="#898e93" /><ellipse cx="27.06" cy="10.35" rx="0.98" ry="2.38" fill="#33323a" /><ellipse cx="30.75" cy="10.78" rx="1.63" ry="2.38" fill="#232229" /><ellipse cx="34.65" cy="10.35" rx="1.30" ry="2.60" fill="#1d1c22" /><rect x="27.28" y="14.03" width="8.02" height="2.60" fill="#df2830" /><rect x="37.90" y="3.63" width="12.24" height="15.17" fill="#d3d4d4" /><polygon points="38.98,18.80 39.85,15.33 43.32,14.25 50.14,14.90 50.14,18.80" fill="#a7c2c3" /><ellipse cx="44.51" cy="12.73" rx="2.71" ry="2.60" fill="#83635a" /><ellipse cx="44.62" cy="8.83" rx="3.58" ry="2.82" fill="#94787f" /><ellipse cx="39.52" cy="16.63" rx="1.84" ry="1.30" fill="#5f4238" /><rect x="28.15" y="3.85" width="20.37" height="2.17" fill="#f6f6f6" rx="1"/><rect x="25.33" y="22.05" width="8.02" height="2.17" fill="#4a4d52" /><rect x="33.13" y="23.56" width="2.17" height="1.08" fill="#f2f2f2" /><rect x="34.86" y="16.85" width="2.60" height="1.52" fill="#f0f0f0" /><rect x="50.14" y="3.63" width="12.78" height="15.17" fill="#aeb2b7" /><rect x="50.14" y="3.63" width="12.78" height="4.33" fill="#d9dcde" /><rect x="50.14" y="14.46" width="12.78" height="4.33" fill="#898e93" /><ellipse cx="52.09" cy="10.35" rx="0.98" ry="2.38" fill="#33323a" /><ellipse cx="55.12" cy="10.78" rx="1.63" ry="2.38" fill="#a8303a" /><ellipse cx="59.67" cy="10.35" rx="1.30" ry="2.60" fill="#1d1c22" /><rect x="52.31" y="14.03" width="8.02" height="2.60" fill="#df2830" /><rect x="62.93" y="3.63" width="12.24" height="15.17" fill="#d3d4d4" /><polygon points="64.01,18.80 64.88,15.33 68.34,14.25 75.17,14.90 75.17,18.80" fill="#a7c2c3" /><ellipse cx="69.53" cy="12.73" rx="2.71" ry="2.60" fill="#83635a" /><ellipse cx="69.64" cy="8.83" rx="3.58" ry="2.82" fill="#94787f" /><ellipse cx="64.55" cy="16.63" rx="1.84" ry="1.30" fill="#5f4238" /><rect x="53.17" y="3.85" width="20.37" height="2.17" fill="#f6f6f6" rx="1"/><rect x="50.36" y="22.05" width="8.02" height="2.17" fill="#4a4d52" /><rect x="58.16" y="23.56" width="2.17" height="1.08" fill="#f2f2f2" /><rect x="59.89" y="16.85" width="2.60" height="1.52" fill="#f0f0f0" /><rect x="75.17" y="3.63" width="12.78" height="15.17" fill="#aeb2b7" /><rect x="75.17" y="3.63" width="12.78" height="4.33" fill="#d9dcde" /><rect x="75.17" y="14.46" width="12.78" height="4.33" fill="#898e93" /><ellipse cx="77.12" cy="10.35" rx="0.98" ry="2.38" fill="#33323a" /><ellipse cx="80.80" cy="10.78" rx="1.63" ry="2.38" fill="#232229" /><ellipse cx="84.70" cy="10.35" rx="1.30" ry="2.60" fill="#7e262e" /><rect x="77.33" y="14.03" width="8.02" height="2.60" fill="#df2830" /><rect x="87.95" y="3.63" width="12.24" height="15.17" fill="#d3d4d4" /><polygon points="89.04,18.80 89.90,15.33 93.37,14.25 100.20,14.90 100.20,18.80" fill="#a7c2c3" /><ellipse cx="94.56" cy="12.73" rx="2.71" ry="2.60" fill="#83635a" /><ellipse cx="94.67" cy="8.83" rx="3.58" ry="2.82" fill="#94787f" /><ellipse cx="89.58" cy="16.63" rx="1.84" ry="1.30" fill="#5f4238" /><rect x="78.20" y="3.85" width="20.37" height="2.17" fill="#f6f6f6" rx="1"/><rect x="75.38" y="22.05" width="8.02" height="2.17" fill="#4a4d52" /><rect x="83.19" y="23.56" width="2.17" height="1.08" fill="#f2f2f2" /><rect x="84.92" y="16.85" width="2.60" height="1.52" fill="#f0f0f0" /><rect x="100.20" y="3.63" width="12.78" height="15.17" fill="#aeb2b7" /><rect x="100.20" y="3.63" width="12.78" height="4.33" fill="#d9dcde" /><rect x="100.20" y="14.46" width="12.78" height="4.33" fill="#898e93" /><ellipse cx="102.15" cy="10.35" rx="0.98" ry="2.38" fill="#33323a" /><ellipse cx="105.83" cy="10.78" rx="1.63" ry="2.38" fill="#232229" /><ellipse cx="109.73" cy="10.35" rx="1.30" ry="2.60" fill="#1d1c22" /><rect x="102.36" y="14.03" width="8.02" height="2.60" fill="#df2830" /><rect x="112.98" y="3.63" width="12.24" height="15.17" fill="#d3d4d4" /><polygon points="114.06,18.80 114.93,15.33 118.40,14.25 125.22,14.90 125.22,18.80" fill="#a7c2c3" /><ellipse cx="119.59" cy="12.73" rx="2.71" ry="2.60" fill="#83635a" /><ellipse cx="119.70" cy="8.83" rx="3.58" ry="2.82" fill="#94787f" /><ellipse cx="114.60" cy="16.63" rx="1.84" ry="1.30" fill="#5f4238" /><rect x="103.23" y="3.85" width="20.37" height="2.17" fill="#f6f6f6" rx="1"/><rect x="100.41" y="22.05" width="8.02" height="2.17" fill="#4a4d52" /><rect x="108.21" y="23.56" width="2.17" height="1.08" fill="#f2f2f2" /><rect x="109.95" y="16.85" width="2.60" height="1.52" fill="#f0f0f0" /><rect x="0.09" y="28.55" width="12.78" height="15.38" fill="#aeb2b7" /><rect x="0.09" y="28.55" width="12.78" height="4.33" fill="#d9dcde" /><rect x="0.09" y="39.38" width="12.78" height="4.55" fill="#898e93" /><ellipse cx="2.04" cy="35.27" rx="0.98" ry="2.38" fill="#33323a" /><ellipse cx="5.72" cy="35.70" rx="1.63" ry="2.38" fill="#232229" /><ellipse cx="9.62" cy="35.27" rx="1.30" ry="2.60" fill="#1d1c22" /><rect x="2.25" y="38.95" width="8.02" height="2.60" fill="#df2830" /><rect x="12.87" y="28.55" width="12.24" height="15.38" fill="#d3d4d4" /><polygon points="13.95,43.93 14.82,40.25 18.29,39.17 25.11,39.82 25.11,43.93" fill="#a7c2c3" /><ellipse cx="19.48" cy="37.65" rx="2.71" ry="2.60" fill="#83635a" /><ellipse cx="19.59" cy="33.75" rx="3.58" ry="2.82" fill="#94787f" /><ellipse cx="14.50" cy="41.55" rx="1.84" ry="1.30" fill="#5f4238" /><rect x="3.12" y="28.76" width="20.37" height="2.17" fill="#f6f6f6" rx="1"/><rect x="0.30" y="47.18" width="8.02" height="2.17" fill="#4a4d52" /><rect x="8.10" y="48.70" width="2.17" height="1.08" fill="#f2f2f2" /><rect x="9.84" y="41.77" width="2.60" height="1.52" fill="#f0f0f0" /><rect x="25.11" y="28.55" width="12.78" height="15.38" fill="#161d3e" /><rect x="25.98" y="31.80" width="11.27" height="4.55" fill="#7e8a92" /><rect x="28.36" y="33.75" width="8.45" height="1.95" fill="#5c8a34" /><rect x="26.63" y="32.23" width="6.07" height="1.73" fill="#c9ced2" /><rect x="27.28" y="38.95" width="8.02" height="2.60" fill="#df2830" /><rect x="37.90" y="28.55" width="12.24" height="15.38" fill="#d3d4d4" /><polygon points="38.98,43.93 39.85,40.25 43.32,39.17 50.14,39.82 50.14,43.93" fill="#a7c2c3" /><ellipse cx="44.51" cy="37.65" rx="2.71" ry="2.60" fill="#83635a" /><ellipse cx="44.62" cy="33.75" rx="3.58" ry="2.82" fill="#94787f" /><ellipse cx="39.52" cy="41.55" rx="1.84" ry="1.30" fill="#5f4238" /><rect x="28.15" y="28.76" width="20.37" height="2.17" fill="#f6f6f6" rx="1"/><rect x="25.33" y="47.18" width="8.02" height="2.17" fill="#4a4d52" /><rect x="33.13" y="48.70" width="2.17" height="1.08" fill="#f2f2f2" /><rect x="34.86" y="41.77" width="2.60" height="1.52" fill="#f0f0f0" /><rect x="50.14" y="28.55" width="12.78" height="15.38" fill="#161d3e" /><rect x="51.01" y="31.80" width="11.27" height="4.55" fill="#7e8a92" /><rect x="53.39" y="33.75" width="8.45" height="1.95" fill="#5c8a34" /><rect x="51.66" y="32.23" width="6.07" height="1.73" fill="#c9ced2" /><rect x="52.31" y="38.95" width="8.02" height="2.60" fill="#df2830" /><rect x="62.93" y="28.55" width="12.24" height="15.38" fill="#d3d4d4" /><polygon points="64.01,43.93 64.88,40.25 68.34,39.17 75.17,39.82 75.17,43.93" fill="#a7c2c3" /><ellipse cx="69.53" cy="37.65" rx="2.71" ry="2.60" fill="#83635a" /><ellipse cx="69.64" cy="33.75" rx="3.58" ry="2.82" fill="#94787f" /><ellipse cx="64.55" cy="41.55" rx="1.84" ry="1.30" fill="#5f4238" /><rect x="53.17" y="28.76" width="20.37" height="2.17" fill="#f6f6f6" rx="1"/><rect x="50.36" y="47.18" width="8.02" height="2.17" fill="#4a4d52" /><rect x="58.16" y="48.70" width="2.17" height="1.08" fill="#f2f2f2" /><rect x="59.89" y="41.77" width="2.60" height="1.52" fill="#f0f0f0" /><rect x="75.17" y="28.55" width="12.78" height="15.38" fill="#161d3e" /><rect x="76.03" y="31.80" width="11.27" height="4.55" fill="#7e8a92" /><rect x="78.42" y="33.75" width="8.45" height="1.95" fill="#474c56" /><rect x="76.68" y="32.23" width="6.07" height="1.73" fill="#c9ced2" /><rect x="77.33" y="38.95" width="8.02" height="2.60" fill="#df2830" /><rect x="87.95" y="28.55" width="12.24" height="15.38" fill="#d3d4d4" /><polygon points="89.04,43.93 89.90,40.25 93.37,39.17 100.20,39.82 100.20,43.93" fill="#a7c2c3" /><ellipse cx="94.56" cy="37.65" rx="2.71" ry="2.60" fill="#83635a" /><ellipse cx="94.67" cy="33.75" rx="3.58" ry="2.82" fill="#94787f" /><ellipse cx="89.58" cy="41.55" rx="1.84" ry="1.30" fill="#5f4238" /><rect x="78.20" y="28.76" width="20.37" height="2.17" fill="#f6f6f6" rx="1"/><rect x="75.38" y="47.18" width="8.02" height="2.17" fill="#4a4d52" /><rect x="83.19" y="48.70" width="2.17" height="1.08" fill="#f2f2f2" /><rect x="84.92" y="41.77" width="2.60" height="1.52" fill="#f0f0f0" /><rect x="100.20" y="28.55" width="12.78" height="15.38" fill="#161d3e" /><rect x="101.06" y="31.80" width="11.27" height="4.55" fill="#7e8a92" /><rect x="103.45" y="33.75" width="8.45" height="1.95" fill="#474c56" /><rect x="101.71" y="32.23" width="6.07" height="1.73" fill="#c9ced2" /><rect x="102.36" y="38.95" width="8.02" height="2.60" fill="#df2830" /><rect x="112.98" y="28.55" width="12.24" height="15.38" fill="#d3d4d4" /><polygon points="114.06,43.93 114.93,40.25 118.40,39.17 125.22,39.82 125.22,43.93" fill="#a7c2c3" /><ellipse cx="119.59" cy="37.65" rx="2.71" ry="2.60" fill="#83635a" /><ellipse cx="119.70" cy="33.75" rx="3.58" ry="2.82" fill="#94787f" /><ellipse cx="114.60" cy="41.55" rx="1.84" ry="1.30" fill="#5f4238" /><rect x="103.23" y="28.76" width="20.37" height="2.17" fill="#f6f6f6" rx="1"/><rect x="100.41" y="47.18" width="8.02" height="2.17" fill="#4a4d52" /><rect x="108.21" y="48.70" width="2.17" height="1.08" fill="#f2f2f2" /><rect x="109.95" y="41.77" width="2.60" height="1.52" fill="#f0f0f0" /></g></svg>
<svg style="left:373.30px;top:252.80px;overflow:hidden" width="124.80" height="69.90" viewBox="0 0 124.80 69.90"><defs><filter id="fF" x="-5%" y="-5%" width="110%" height="110%"><feGaussianBlur stdDeviation="0.5"/></filter></defs><g filter="url(#fF)"><rect x="0.00" y="0.00" width="125.16" height="70.22" fill="#54423a" /><rect x="0.00" y="0.00" width="125.16" height="11.05" fill="#8a7263" /><rect x="40.64" y="0.00" width="26.01" height="6.18" fill="#d9c9b2" /><rect x="87.78" y="0.00" width="13.00" height="9.43" fill="#3c3230" /><rect x="116.22" y="0.00" width="8.94" height="14.30" fill="#c9c0c4" /><ellipse cx="6.83" cy="5.85" rx="5.53" ry="4.88" fill="#9a7458" /><polygon points="0.33,0.33 12.68,0.33 12.35,3.25 0.65,3.58" fill="#1f1d1f" /><ellipse cx="2.44" cy="11.05" rx="2.93" ry="2.28" fill="#5a5a5c" /><polygon points="0.33,17.56 6.50,12.68 24.38,11.05 26.01,33.81 6.50,37.06 0.33,32.18" fill="#24262b" /><rect x="0.33" y="17.56" width="2.93" height="24.38" fill="#8a9ab0" /><polygon points="0.33,33.81 8.94,33.00 10.57,41.94 8.13,66.32 1.63,67.95" fill="#b27a52" /><ellipse cx="59.33" cy="6.99" rx="7.48" ry="5.85" fill="#7b4a2b" /><ellipse cx="60.96" cy="13.98" rx="4.88" ry="6.50" fill="#d3a585" /><polygon points="45.51,7.80 53.64,9.43 58.19,24.06 50.39,38.69 40.64,32.18 43.89,17.56" fill="#1c1c20" /><ellipse cx="108.91" cy="4.88" rx="7.80" ry="6.50" fill="#cc9c80" /><ellipse cx="108.91" cy="0.98" rx="7.15" ry="2.28" fill="#8a8680" /><polygon points="98.83,9.43 107.28,12.68 117.85,8.62 121.10,17.56 117.04,29.75 102.41,28.12 98.34,19.18" fill="#56648c" /><polygon points="113.78,17.56 125.16,12.68 125.16,32.18 110.53,30.88" fill="#ebe7e3" /><ellipse cx="121.91" cy="6.18" rx="3.58" ry="5.53" fill="#c89a80" /><ellipse cx="74.45" cy="8.78" rx="8.78" ry="8.45" fill="#c48c62" /><polygon points="65.83,1.30 83.71,0.98 84.53,6.18 74.77,3.25 66.32,6.83" fill="#6a5040" /><ellipse cx="65.83" cy="9.43" rx="1.46" ry="2.28" fill="#c04a38" /><polygon points="53.64,28.12 66.64,19.99 81.27,22.43 87.78,35.44 84.53,70.22 52.83,70.22" fill="#1b1b1d" /><polygon points="56.08,33.81 61.77,29.75 73.15,24.87 78.02,17.56 85.34,19.18 81.27,30.56 74.77,41.94 63.39,47.63 57.70,43.56" fill="#c98e5e" /><ellipse cx="86.48" cy="13.98" rx="10.08" ry="5.53" fill="#d5a27c" /><polygon points="72.82,22.76 74.77,20.48 79.97,25.03 78.02,27.31" fill="#1cb84c" /><ellipse cx="52.83" cy="31.37" rx="3.25" ry="7.15" fill="#c8946e" /><polygon points="70.71,43.56 74.77,43.24 74.45,49.25 71.20,49.25" fill="#d2a020" /><ellipse cx="18.69" cy="9.43" rx="4.55" ry="4.88" fill="#5c3f2c" /><ellipse cx="31.70" cy="10.73" rx="10.08" ry="9.10" fill="#6f5f56" /><ellipse cx="39.34" cy="17.88" rx="6.50" ry="8.45" fill="#c9a17f" /><polygon points="22.76,9.43 34.14,2.93 43.08,6.99 37.39,11.05 30.88,22.43 24.38,20.81" fill="#66564e" /><rect x="34.46" y="13.49" width="11.87" height="1.63" fill="#4a4038" /><polygon points="26.82,25.68 37.39,28.12 39.01,32.18 29.26,29.75" fill="#2a2422" /><polygon points="6.50,41.94 13.00,32.18 26.82,27.63 40.64,31.37 50.39,40.31 53.97,58.19 53.64,70.22 6.83,70.22" fill="#1c1c1f" /><polygon points="9.75,47.63 14.95,48.44 14.30,56.24 9.43,55.59" fill="#c8a224" /><polygon points="9.75,47.63 14.95,48.44 14.63,50.88 9.75,50.07" fill="#c0362a" /><polyline points="39.34,32.18 50.39,51.69" fill="none" stroke="#7a6a5a" stroke-width="0.65" /><polygon points="35.76,53.64 53.32,50.39 56.57,69.57 39.34,70.22" fill="#e9e9e9" /><polygon points="40.96,59.01 51.69,57.22 53.64,68.27 42.91,69.25" fill="#2b8c82" /><ellipse cx="47.46" cy="63.07" rx="2.60" ry="3.25" fill="#c9a98c" /><rect x="28.45" y="68.27" width="3.25" height="1.95" fill="#1cb84c" /><polygon points="81.27,41.94 92.65,33.81 110.53,29.75 125.16,33.81 125.16,70.22 79.65,70.22" fill="#8f8f8d" /><ellipse cx="100.78" cy="37.06" rx="6.50" ry="3.58" fill="#24242a" /><ellipse cx="115.41" cy="40.31" rx="5.85" ry="4.88" fill="#24242a" /><ellipse cx="120.29" cy="54.94" rx="4.88" ry="6.50" fill="#24242a" /><ellipse cx="108.91" cy="58.19" rx="5.53" ry="4.23" fill="#24242a" /><ellipse cx="113.78" cy="66.32" rx="7.15" ry="3.25" fill="#24242a" /><ellipse cx="87.78" cy="46.81" rx="3.90" ry="4.88" fill="#24242a" /><ellipse cx="100.78" cy="51.69" rx="3.25" ry="2.60" fill="#24242a" /><ellipse cx="123.54" cy="41.94" rx="2.28" ry="4.88" fill="#24242a" /><ellipse cx="94.28" cy="54.94" rx="8.13" ry="9.75" fill="#c4cad4" /><ellipse cx="98.34" cy="19.99" rx="10.40" ry="9.10" fill="#e3dfdb" /><ellipse cx="91.35" cy="30.88" rx="7.15" ry="8.13" fill="#c9a18a" /><polygon points="83.71,25.68 91.03,24.38 91.84,28.61 84.53,30.23" fill="#1c1a1e" /><ellipse cx="85.83" cy="64.69" rx="7.48" ry="4.88" fill="#c89a7a" /><ellipse cx="82.09" cy="45.19" rx="2.28" ry="4.23" fill="#c8946e" /><polygon points="104.36,47.63 107.61,47.63 106.96,53.64 104.03,52.99" fill="#d23a20" /></g></svg>
<svg style="left:191.40px;top:117.70px;" width="5.20" height="5.20" viewBox="0 0 10 10"><path d="M9 1 L1.8 8.2 M1.5 3.2 V8.5 H6.8" fill="none" stroke="#444" stroke-width="1.3"/></svg>
<div class="clip" style="left:115px;top:124px;width:106px;height:85.6px"><div class="b" style="left:11.0px;top:1.5px;width:78.0px;height:100px;background:#e5e9ed;border-radius:3px"></div><svg style="left:2.2px;top:4px" width="10" height="10" viewBox="0 0 10 10"><path d="M0 0 H10 V9.3 Z" fill="#e5e9ed"/></svg></div>
<span class="t" style="left:20.90px;top:16.78px;font-size:10.5px;line-height:13.65px;color:#1328b4;font-weight:700;letter-spacing:0.083px;-webkit-text-stroke:0.35px #1328b4;">MAGNET</span>
<span class="t" style="left:70.60px;top:16.78px;font-size:10.5px;line-height:13.65px;color:#1d4ee0;letter-spacing:0.030px;-webkit-text-stroke:0.3px #1d4ee0;">REVIEW</span>
<span class="t" style="left:112.60px;top:18.32px;font-size:3.2px;line-height:4.16px;color:#1b3fd6;">®</span>
<span class="t" style="left:167.30px;top:14.44px;font-size:6.4px;line-height:8.32px;color:#2e2e2e;letter-spacing:-0.030px;">Case</span>
<span class="t" style="left:167.30px;top:22.73px;font-size:7.5px;line-height:9.75px;color:#2e2e2e;letter-spacing:0.125px;-webkit-text-stroke:0.1px #2e2e2e;">Magnet Job - Heist</span>
<span class="t" style="left:269.50px;top:14.44px;font-size:6.4px;line-height:8.32px;color:#1a41d0;letter-spacing:0.038px;">Explorer</span>
<span class="t" style="left:269.50px;top:22.60px;font-size:7.7px;line-height:10.01px;color:#1a41d0;letter-spacing:-0.127px;-webkit-text-stroke:0.15px #1a41d0;">Search</span>
<span class="t" style="left:824.90px;top:17.99px;font-size:7.4px;line-height:9.62px;color:#5a5a5a;letter-spacing:0.110px;-webkit-text-stroke:0.1px #5a5a5a;">Settings</span>
<span class="t" style="left:894.30px;top:17.99px;font-size:7.4px;line-height:9.62px;color:#5a5a5a;letter-spacing:0.020px;-webkit-text-stroke:0.1px #5a5a5a;">Jonathan Evans</span>
<span class="t" style="left:21.60px;top:43.46px;font-size:11.6px;line-height:15.08px;color:#303030;letter-spacing:-0.196px;-webkit-text-stroke:0.1px #f3f3f3;">Explorer</span>
<span class="t" style="left:87.60px;top:48.59px;font-size:7.1px;line-height:9.23px;color:#2347d6;letter-spacing:0.253px;-webkit-text-stroke:0.14px #2347d6;">Intelligent search</span>
<span class="t" style="left:152.40px;top:46.72px;font-size:6.9px;line-height:8.97px;color:#1b2e9c;-webkit-text-stroke:0.15px #1b2e9c;">BETA</span>
<span class="t" style="left:189.70px;top:47.82px;font-size:7.2px;line-height:9.36px;color:#5a5a5a;letter-spacing:0.392px;">Artifacts</span>
<span class="t" style="left:235.50px;top:47.82px;font-size:7.2px;line-height:9.36px;color:#5a5a5a;letter-spacing:0.227px;">Conversations</span>
<span class="t" style="left:300.30px;top:47.82px;font-size:7.2px;line-height:9.36px;color:#5a5a5a;letter-spacing:0.284px;">Worldmap</span>
<span class="t" style="left:351.90px;top:47.82px;font-size:7.2px;line-height:9.36px;color:#5a5a5a;letter-spacing:0.224px;">Timeline</span>
<span class="t" style="left:104.60px;top:92.72px;font-size:9.2px;line-height:11.96px;color:#2b2b2b;letter-spacing:0.095px;">Matches</span>
<span class="t" style="left:148.40px;top:93.51px;font-size:8.3px;line-height:10.79px;color:#444;letter-spacing:-0.216px;">(46)</span>
<span class="t" style="left:179.80px;top:94.22px;font-size:6.9px;line-height:8.97px;color:#a4a4a4;letter-spacing:0.125px;-webkit-text-stroke:0.1px #a4a4a4;">Add tags</span>
<span class="t" style="left:222.50px;top:94.22px;font-size:6.9px;line-height:8.97px;color:#a4a4a4;letter-spacing:-0.028px;-webkit-text-stroke:0.1px #a4a4a4;">Remove tags</span>
<span class="t" style="left:277.60px;top:94.22px;font-size:6.9px;line-height:8.97px;color:#a4a4a4;letter-spacing:0.127px;-webkit-text-stroke:0.1px #a4a4a4;">Actions</span>
<span class="t" style="left:137.40px;top:115.75px;font-size:7.0px;line-height:9.1px;color:#3a3a3a;font-weight:700;letter-spacing:0.074px;">Stuart Mcphee</span>
<span class="t" style="left:137.40px;top:131.11px;font-size:6.9px;line-height:8.97px;color:#5c5c5c;letter-spacing:0.075px;">Today. I will share</span>
<span class="t" style="left:126.50px;top:141.31px;font-size:6.9px;line-height:8.97px;color:#5c5c5c;letter-spacing:0.075px;width:77.40px;text-align:center;">my skills. 1.</span>
<span class="t" style="left:126.50px;top:151.51px;font-size:6.9px;line-height:8.97px;color:#5c5c5c;letter-spacing:0.075px;width:77.40px;text-align:center;">Fundamental</span>
<span class="t" style="left:126.50px;top:161.61px;font-size:6.9px;line-height:8.97px;color:#5c5c5c;letter-spacing:0.075px;width:77.40px;text-align:center;">analysis When</span>
<span class="t" style="left:126.50px;top:171.81px;font-size:6.9px;line-height:8.97px;color:#5c5c5c;letter-spacing:0.075px;width:77.40px;text-align:center;">valuing a country&#x27;s</span>
<span class="t" style="left:126.50px;top:182.01px;font-size:6.9px;line-height:8.97px;color:#5c5c5c;letter-spacing:0.075px;width:77.40px;text-align:center;">currency with</span>
<span class="t" style="left:126.50px;top:192.21px;font-size:6.9px;line-height:8.97px;color:#5c5c5c;letter-spacing:0.075px;width:77.40px;text-align:center;">another country&#x27;s</span>
<span class="t" style="left:126.50px;top:202.41px;font-size:6.9px;line-height:8.97px;color:#5c5c5c;letter-spacing:0.075px;width:77.40px;text-align:center;">currency.</span>
<div class="b" style="left:104.60px;top:209.60px;width:125.30px;height:18.40px;background:#fff;border-radius:0 0 4px 4px"></div>
<svg style="left:223.60px;top:110.90px;" width="4.60" height="3.10" viewBox="0 0 8 5"><path d="M0 5 L4 0 L8 5 Z" fill="#5a5a5a"/></svg>
<div class="b" style="left:223.90px;top:117.20px;width:4.10px;height:10.30px;background:#7d7d7d;border-radius:2px"></div>
<svg style="left:223.60px;top:203.50px;" width="4.60" height="3.10" viewBox="0 0 8 5"><path d="M0 0 L4 5 L8 0 Z" fill="#5a5a5a"/></svg>
<div class="b" style="left:104.60px;top:209.60px;width:125.30px;height:0.90px;background:#eeeeee"></div>
<div class="b" style="left:110.80px;top:215.30px;width:7.60px;height:7.80px;border:0.8px solid #d6d6d6;border-radius:1px;background:#fff"></div>
<div class="b" style="left:238.90px;top:209.60px;width:125.40px;height:0.90px;background:#eeeeee"></div>
<div class="b" style="left:245.10px;top:215.30px;width:7.60px;height:7.80px;border:0.8px solid #d6d6d6;border-radius:1px;background:#fff"></div>
<div class="b" style="left:372.70px;top:209.60px;width:125.70px;height:0.90px;background:#eeeeee"></div>
<div class="b" style="left:378.90px;top:215.30px;width:7.60px;height:7.80px;border:0.8px solid #d6d6d6;border-radius:1px;background:#fff"></div>
<div class="b" style="left:506.70px;top:209.60px;width:125.40px;height:0.90px;background:#eeeeee"></div>
<div class="b" style="left:512.90px;top:215.30px;width:7.60px;height:7.80px;border:0.8px solid #d6d6d6;border-radius:1px;background:#fff"></div>
<svg style="left:129.30px;top:215.60px;" width="7.20" height="7.20" viewBox="0 0 14 14"><rect x="0" y="0" width="14" height="14" rx="2.6" fill="#622f90"/><path d="M4 3.2 C3 3.8 3.4 6 5.4 8.2 C7.6 10.6 9.9 11.2 10.7 10.2 L11 9.4 L9.2 8.2 L8.4 8.9 C7.4 8.6 5.8 7 5.4 5.8 L6.1 5 L5 3 Z" fill="#fff"/><path d="M7.4 3 C9.6 3.2 10.9 4.6 11 6.6" fill="none" stroke="#fff" stroke-width="0.9"/></svg>
<svg style="left:263.00px;top:215.20px;" width="7.80" height="7.80" viewBox="0 0 14 14"><rect x="0" y="0" width="14" height="14" rx="3" fill="#111"/><path d="M7.6 2.6 V9 A1.9 1.9 0 1 1 5.7 7.1" fill="none" stroke="#fff" stroke-width="1.5"/><path d="M7.6 2.8 C7.9 4.4 9 5.3 10.6 5.4" fill="none" stroke="#fff" stroke-width="1.5"/></svg>
<svg style="left:397.80px;top:216.20px;" width="7.50" height="6.20" viewBox="0 0 15 13"><rect x="0.6" y="0.6" width="13.8" height="11.8" rx="1.2" fill="#dfeefa" stroke="#2a86c8" stroke-width="1.2"/><path d="M2 10.6 L5.4 6.2 L7.8 8.8 L10 6.8 L13 10.6 Z" fill="#2a86c8"/><circle cx="10.3" cy="4" r="1.2" fill="#2a86c8"/></svg>
<svg style="left:531.80px;top:216.20px;" width="7.50" height="6.20" viewBox="0 0 15 13"><rect x="0.6" y="0.6" width="13.8" height="11.8" rx="1.2" fill="#dfeefa" stroke="#2a86c8" stroke-width="1.2"/><path d="M2 10.6 L5.4 6.2 L7.8 8.8 L10 6.8 L13 10.6 Z" fill="#2a86c8"/><circle cx="10.3" cy="4" r="1.2" fill="#2a86c8"/></svg>
<svg style="left:592.70px;top:260.80px;" width="5.20" height="5.20" viewBox="0 0 10 10"><path d="M9 1 L1.8 8.2 M1.5 3.2 V8.5 H6.8" fill="none" stroke="#444" stroke-width="1.3"/></svg>
<div class="b" style="left:529.00px;top:269.00px;width:84.60px;height:37.80px;background:#e5e9ed;border-radius:3px"></div>
<svg style="left:520.20px;top:271.60px;" width="10.00" height="10.00" viewBox="0 0 10 10"><path d="M0 0 H10 V9.3 Z" fill="#e5e9ed"/></svg>
<span class="t" style="left:138.90px;top:215.08px;font-size:6.5px;line-height:8.45px;color:#4a4a4a;letter-spacing:-0.271px;">Viber Messages</span>
<span class="t" style="left:273.30px;top:215.08px;font-size:6.5px;line-height:8.45px;color:#4a4a4a;letter-spacing:-0.205px;">TikTok Media</span>
<span class="t" style="left:407.70px;top:215.08px;font-size:6.5px;line-height:8.45px;color:#4a4a4a;letter-spacing:-0.311px;">Pictures</span>
<span class="t" style="left:541.70px;top:215.08px;font-size:6.5px;line-height:8.45px;color:#4a4a4a;letter-spacing:-0.298px;">Pictures</span>
<span class="t" style="left:548.20px;top:258.85px;font-size:7.0px;line-height:9.1px;color:#3a3a3a;font-weight:700;letter-spacing:-0.014px;">Alan wilkins</span>
<span class="t" style="left:539.30px;top:274.01px;font-size:6.9px;line-height:8.97px;color:#5c5c5c;letter-spacing:-0.004px;">Yes. I know the news</span>
<span class="t" style="left:529.00px;top:284.21px;font-size:6.9px;line-height:8.97px;color:#5c5c5c;letter-spacing:-0.004px;width:84.60px;text-align:center;">that Trump was</span>
<span class="t" style="left:529.00px;top:294.71px;font-size:6.9px;line-height:8.97px;color:#5c5c5c;letter-spacing:-0.004px;width:84.60px;text-align:center;">attacked.</span>
<span class="t" style="left:534.30px;top:311.17px;font-size:6.2px;line-height:8.06px;color:#555;letter-spacing:-0.026px;">2024-07-15 10:49:37 +0000</span>
<div class="b" style="left:100.00px;top:330.00px;width:546.00px;height:15.00px;background:#f0f0f0"></div>
<div class="b" style="left:632.70px;top:108.00px;width:7.40px;height:222.00px;background:#fbfbfb"></div>
<svg style="left:633.90px;top:110.30px;" width="4.70" height="3.30" viewBox="0 0 8 5"><path d="M0 5 L4 0 L8 5 Z" fill="#5a5a5a"/></svg>
<div class="b" style="left:634.10px;top:117.20px;width:4.20px;height:28.40px;background:#7d7d7d;border-radius:2px"></div>
<svg style="left:634.10px;top:324.40px;" width="4.70" height="3.30" viewBox="0 0 8 5"><path d="M0 0 L4 5 L8 0 Z" fill="#5a5a5a"/></svg>
<svg style="left:865.60px;top:83.90px;" width="7.00" height="7.00" viewBox="0 0 10 10"><path d="M1 1 L9 9 M9 1 L1 9" fill="none" stroke="#0f33d0" stroke-width="1.9" stroke-linecap="round"/></svg>
<div class="card" style="left:657.60px;top:114.80px;width:211.60px;height:308.00px;"></div>
<div class="b" style="left:828.30px;top:119.80px;width:36.60px;height:18.90px;border:0.9px solid #dcdcdc;border-radius:2px;background:#fff"></div>
<div class="b" style="left:845.80px;top:124.00px;width:0.80px;height:10.60px;background:#dadada"></div>
<svg style="left:852.60px;top:127.80px;" width="5.60" height="3.40" viewBox="0 0 10 6"><path d="M1 1 L5 5 L9 1" fill="none" stroke="#b2b2b2" stroke-width="1.4" stroke-linecap="round" stroke-linejoin="round"/></svg>
<svg style="left:657.60px;top:143.00px;overflow:hidden;" width="211.60" height="119.00" viewBox="0 0 211.60000000000002 119.0"><rect x="0" y="0" width="211.60000000000002" height="119.0" fill="#fff"/><rect x="72.6" y="0" width="67" height="119.0" fill="#4b4a45"/><rect x="72.6" y="30.2" width="33" height="12" fill="#39423f"/><rect x="74.9" y="31.5" width="6" height="8" fill="#c9b29a"/><rect x="82.4" y="32.0" width="20" height="6" fill="#56636a"/><rect x="105.6" y="30.2" width="34" height="12" fill="#d5d3d2"/><ellipse cx="127.4" cy="38.0" rx="8.5" ry="6.5" fill="#b08b90"/><rect x="72.6" y="78.0" width="67" height="41" fill="#3b3b3b"/><path d="M72.6 78.0 h38 v6 l-14 8 h-24 z" fill="#8f8e8c"/><rect x="112.4" y="78.0" width="27.2" height="12.5" fill="#9fb0b8"/><rect x="105.4" y="78.0" width="8" height="11" fill="#5a3a30"/><rect x="81.2" y="18.8" width="52.2" height="6.4" rx="3.2" fill="#fff"/><rect x="91.9" y="24.2" width="29" height="6.4" rx="3" fill="#fff"/><text x="107.3" y="23.9" font-size="4.9" font-weight="700" text-anchor="middle" fill="#1a1a1a" font-family="Liberation Sans, sans-serif" textLength="46" lengthAdjust="spacingAndGlyphs">WOW, BEWARE OF THIS</text><text x="106.6" y="29.6" font-size="4.9" font-weight="700" text-anchor="middle" fill="#1a1a1a" font-family="Liberation Sans, sans-serif" textLength="23.5" lengthAdjust="spacingAndGlyphs">NEW TACTIC</text><defs><linearGradient id="vg" x1="0" y1="0" x2="0" y2="1"><stop offset="0.05" stop-color="#000" stop-opacity="0"/><stop offset="0.19" stop-color="#000" stop-opacity="0.08"/><stop offset="0.31" stop-color="#000" stop-opacity="0.22"/><stop offset="0.45" stop-color="#000" stop-opacity="0.58"/><stop offset="0.57" stop-color="#000" stop-opacity="0.77"/><stop offset="0.71" stop-color="#000" stop-opacity="0.88"/><stop offset="0.79" stop-color="#000" stop-opacity="0.94"/><stop offset="0.93" stop-color="#000" stop-opacity="1"/></linearGradient></defs><rect x="0" y="61.0" width="211.60000000000002" height="58.0" fill="url(#vg)"/></svg>
<div class="b" style="left:663.60px;top:181.90px;width:201.00px;height:6.75px;background:#111"></div>
<div class="b" style="left:658.10px;top:188.56px;width:209.90px;height:6.75px;background:#111"></div>
<div class="b" style="left:659.70px;top:195.22px;width:207.10px;height:6.75px;background:#111"></div>
<div class="b" style="left:658.60px;top:201.88px;width:208.90px;height:6.75px;background:#111"></div>
<div class="b" style="left:658.60px;top:208.54px;width:209.40px;height:6.75px;background:#111"></div>
<div class="b" style="left:688.30px;top:215.20px;width:150.40px;height:6.75px;background:#111"></div>
<span class="t" style="left:831.80px;top:101.79px;font-size:7.1px;line-height:9.23px;color:#1a41d0;letter-spacing:0.255px;-webkit-text-stroke:0.15px #1a41d0;">Download</span>
<span class="t" style="left:666.10px;top:124.02px;font-size:7.2px;line-height:9.36px;color:#1a41d0;letter-spacing:0.218px;-webkit-text-stroke:0.2px #1a41d0;">View still frames</span>
<span class="t" style="left:774.30px;top:125.21px;font-size:6.9px;line-height:8.97px;color:#444;letter-spacing:-0.052px;">Playback speed:</span>
<span class="t" style="left:834.00px;top:125.21px;font-size:6.9px;line-height:8.97px;color:#444;letter-spacing:-0.391px;">1x</span>
<span class="t" style="left:664.20px;top:181.31px;font-size:6.6px;line-height:8.58px;color:#fff;letter-spacing:-0.253px;-webkit-text-stroke:0.1px #fff;">A new and alarming tactic is being used by criminals, and it&#x27;s truly terrifying.</span>
<span class="t" style="left:658.70px;top:187.97px;font-size:6.6px;line-height:8.58px;color:#fff;letter-spacing:-0.293px;-webkit-text-stroke:0.1px #fff;">When this teenager girl was walking along the street, she was approached by a</span>
<span class="t" style="left:660.30px;top:194.63px;font-size:6.6px;line-height:8.58px;color:#fff;letter-spacing:-0.284px;-webkit-text-stroke:0.1px #fff;">seemingly normal man asking for directions as she tried to give him directions.</span>
<span class="t" style="left:659.20px;top:201.29px;font-size:6.6px;line-height:8.58px;color:#fff;letter-spacing:-0.275px;-webkit-text-stroke:0.1px #fff;">He kept asking questions and shoving the book only inches from her face. The</span>
<span class="t" style="left:659.20px;top:207.95px;font-size:6.6px;line-height:8.58px;color:#fff;letter-spacing:-0.276px;-webkit-text-stroke:0.1px #fff;">girl grew uneasy, sensing something was off. He finally lets her continue on her</span>
<span class="t" style="left:688.90px;top:214.61px;font-size:6.6px;line-height:8.58px;color:#fff;letter-spacing:-0.262px;-webkit-text-stroke:0.1px #fff;">walk, but as she does, she begins holding her head as if</span>
<div class="b" style="left:661.10px;top:229.00px;width:17.50px;height:17.50px;background:rgba(26,26,26,.86);border-radius:50%"></div>
<svg style="left:667.70px;top:234.70px;" width="5.40" height="6.20" viewBox="0 0 9 10"><path d="M0.5 0.3 L8.6 5 L0.5 9.7 Z" fill="#fff"/></svg>
<svg style="left:803.50px;top:233.30px;" width="9.20" height="8.00" viewBox="0 0 18 16"><path d="M1 5.2 H4.6 L9 1.2 V14.8 L4.6 10.8 H1 Z" fill="#f2f2f2"/><path d="M11.2 4.6 C13.4 6 13.4 10 11.2 11.4 Z" fill="#f2f2f2"/><path d="M11.4 1.2 C18 3.4 18 12.6 11.4 14.8" fill="none" stroke="#f2f2f2" stroke-width="1.7"/></svg>
<svg style="left:828.70px;top:234.20px;" width="6.60" height="6.60" viewBox="0 0 14 14"><path d="M1 5 V1 H5 M9 1 H13 V5 M13 9 V13 H9 M5 13 H1 V9" fill="none" stroke="#f2f2f2" stroke-width="2"/></svg>
<svg style="left:855.30px;top:233.00px;" width="2.40" height="8.60" viewBox="0 0 4 16"><circle cx="2" cy="2.2" r="1.7" fill="#f2f2f2"/><circle cx="2" cy="8" r="1.7" fill="#f2f2f2"/><circle cx="2" cy="13.8" r="1.7" fill="#f2f2f2"/></svg>
<div class="b" style="left:665.60px;top:249.90px;width:194.40px;height:2.10px;background:#c4c4c4;border-radius:1px"></div>
<div class="b" style="left:665.60px;top:249.90px;width:6.80px;height:2.10px;background:#fff;border-radius:1px"></div>
<div class="b" style="left:657.60px;top:262.00px;width:211.60px;height:18.20px;background:#f3f3f3;border-bottom:1px solid #e9e9e9"></div>
<svg style="left:697.60px;top:268.10px;" width="3.80" height="6.20" viewBox="0 0 6 10"><path d="M5 1 L1 5 L5 9" fill="none" stroke="#1a41d0" stroke-width="1.7" stroke-linecap="round" stroke-linejoin="round"/></svg>
<svg style="left:744.40px;top:268.10px;" width="3.80" height="6.20" viewBox="0 0 6 10"><path d="M1 1 L5 5 L1 9" fill="none" stroke="#1a41d0" stroke-width="1.7" stroke-linecap="round" stroke-linejoin="round"/></svg>
<svg style="left:669.80px;top:287.90px;" width="3.60" height="6.00" viewBox="0 0 6 10"><path d="M1 1 L5 5 L1 9" fill="none" stroke="#474747" stroke-width="1.6" stroke-linecap="round" stroke-linejoin="round"/></svg>
<svg style="left:678.20px;top:287.80px;" width="7.44" height="7.00" viewBox="166 68 68 64"><path d="M190 73 L215 100 L190 127 L165 100 Z" fill="#c6962a"/><circle cx="190" cy="100" r="5" fill="#e6cf96"/><circle cx="222" cy="79" r="7" fill="#c6962a"/><circle cx="222" cy="121" r="7" fill="#c6962a"/><circle cx="229" cy="100" r="4.5" fill="#d2ad52"/></svg>
<div class="b" style="left:657.60px;top:301.00px;width:211.60px;height:0.80px;background:#ececec"></div>
<svg style="left:668.60px;top:308.60px;" width="6.00" height="3.60" viewBox="0 0 10 6"><path d="M1 1 L5 5 L9 1" fill="none" stroke="#474747" stroke-width="1.6" stroke-linecap="round" stroke-linejoin="round"/></svg>
<svg style="left:678.20px;top:307.00px;" width="7.44" height="7.00" viewBox="166 68 68 64"><path d="M190 73 L215 100 L190 127 L165 100 Z" fill="#c6962a"/><circle cx="190" cy="100" r="5" fill="#e6cf96"/><circle cx="222" cy="79" r="7" fill="#c6962a"/><circle cx="222" cy="121" r="7" fill="#c6962a"/><circle cx="229" cy="100" r="4.5" fill="#d2ad52"/></svg>
<div class="card" style="left:657.60px;top:431.90px;width:212.10px;height:88.10px;"></div>
<svg style="left:849.70px;top:443.00px;" width="6.20" height="3.80" viewBox="0 0 10 6"><path d="M1 5 L5 1 L9 5" fill="none" stroke="#222" stroke-width="2.1" stroke-linecap="round" stroke-linejoin="round"/></svg>
<div class="b" style="left:665.20px;top:461.40px;width:196.70px;height:58.60px;border:0.9px solid #e6e6e6;background:#fff"></div>
<div class="b" style="left:669.60px;top:465.80px;width:21.20px;height:21.40px;border:0.9px solid #6e6e6e;border-radius:2px;background:#fff"></div>
<div class="b" style="left:676.20px;top:468.90px;width:8.40px;height:15.60px;border:0.9px solid #858585;border-radius:1.5px;background:#fff"></div>
<div class="b" style="left:676.60px;top:470.80px;width:7.60px;height:0.70px;background:#999"></div>
<div class="b" style="left:676.60px;top:481.80px;width:7.60px;height:0.70px;background:#999"></div>
<span class="t" style="left:681.60px;top:233.12px;font-size:7.2px;line-height:9.36px;color:#fff;letter-spacing:0.076px;-webkit-text-stroke:0.15px #fff;">0:01 / 0:50</span>
<span class="t" style="left:663.70px;top:266.65px;font-size:7.0px;line-height:9.1px;color:#333;letter-spacing:0.167px;">Match</span>
<span class="t" style="left:716.40px;top:266.65px;font-size:7.0px;line-height:9.1px;color:#444;letter-spacing:0.015px;">1 / 2</span>
<span class="t" style="left:688.40px;top:286.00px;font-size:8.3px;line-height:10.79px;color:#303030;letter-spacing:0.172px;-webkit-text-stroke:0.12px #303030;">Transcript</span>
<span class="t" style="left:688.40px;top:305.21px;font-size:8.3px;line-height:10.79px;color:#303030;letter-spacing:0.135px;-webkit-text-stroke:0.12px #303030;">Frame descriptions</span>
<span class="t" style="left:665.80px;top:323.95px;font-size:5.0px;line-height:6.5px;color:#777;letter-spacing:0.217px;">00:00 - Match 1</span>
<span class="t" style="left:665.80px;top:353.92px;font-size:7.2px;line-height:9.36px;color:#2a2a2a;letter-spacing:0.176px;-webkit-text-stroke:0.08px #2a2a2a;">alarming tactic used by criminals.&quot; On the right side of the</span>
<span class="t" style="left:665.80px;top:333.52px;font-size:7.2px;line-height:9.36px;color:#2a2a2a;letter-spacing:0.176px;-webkit-text-stroke:0.08px #2a2a2a;">The image is a screenshot of a video call with a caption</span>
<span class="t" style="left:665.80px;top:343.72px;font-size:7.2px;line-height:9.36px;color:#2a2a2a;letter-spacing:0.176px;-webkit-text-stroke:0.08px #2a2a2a;">that reads &quot;Wow, beware of this new tactic. A new and</span>
<span class="t" style="left:665.80px;top:364.12px;font-size:7.2px;line-height:9.36px;color:#2a2a2a;letter-spacing:0.176px;-webkit-text-stroke:0.08px #2a2a2a;">image, there is a photo of a young woman wearing a pink</span>
<span class="t" style="left:665.80px;top:374.32px;font-size:7.2px;line-height:9.36px;color:#2a2a2a;letter-spacing:0.176px;-webkit-text-stroke:0.08px #2a2a2a;">turban on her head. She is looking directly at the camera</span>
<span class="t" style="left:665.80px;top:384.02px;font-size:7.2px;line-height:9.36px;color:#2a2a2a;letter-spacing:0.176px;-webkit-text-stroke:0.08px #2a2a2a;">with a serious expression on her face. In the background,</span>
<span class="t" style="left:665.80px;top:394.52px;font-size:7.2px;line-height:9.36px;color:#2a2a2a;letter-spacing:0.176px;-webkit-text-stroke:0.08px #2a2a2a;">there are two people walking on a street with a white van</span>
<span class="t" style="left:665.80px;top:404.62px;font-size:7.2px;line-height:9.36px;color:#2a2a2a;letter-spacing:0.176px;-webkit-text-stroke:0.08px #2a2a2a;">parked on the side. The caption is written in black text.</span>
<span class="t" style="left:665.50px;top:439.07px;font-size:10.2px;line-height:13.26px;color:#3c3c3c;letter-spacing:0.094px;">Details</span>
<span class="t" style="left:780.30px;top:440.51px;font-size:6.9px;line-height:8.97px;color:#1a41d0;letter-spacing:0.053px;-webkit-text-stroke:0.12px #1a41d0;">Go to details page</span>
<span class="t" style="left:708.60px;top:467.91px;font-size:6.6px;line-height:8.58px;color:#555;letter-spacing:0.095px;">Evidence</span>
<span class="t" style="left:716.00px;top:478.01px;font-size:6.6px;line-height:8.58px;color:#555;letter-spacing:0.117px;">source</span>
<span class="t" style="left:742.90px;top:468.28px;font-size:6.8px;line-height:8.84px;color:#222;font-weight:700;letter-spacing:0.287px;">00008101-</span>
<span class="t" style="left:742.90px;top:478.48px;font-size:6.8px;line-height:8.84px;color:#222;font-weight:700;letter-spacing:0.088px;">001451341E47001E_files_full.</span>
<span class="t" style="left:742.90px;top:488.38px;font-size:6.8px;line-height:8.84px;color:#222;font-weight:700;letter-spacing:-0.018px;">zip</span>
<div class="b" style="left:415.70px;top:457.40px;width:154.20px;height:24.40px;border:1px solid #6c88e6;border-radius:1.5px;background:#e9eefc"></div>
<svg style="left:529.30px;top:464.10px;" width="11.80" height="11.00" viewBox="0 0 19 18.5"><rect x="0.4" y="8" width="2.7" height="9.4" fill="#1238d0"/><path d="M6.6 17 V8.8 L10.4 2.4 C11.9 2.2 12.6 3.6 12 5.2 L11.3 7.8 H16.3 C17.6 7.8 18.3 9 17.9 10.2 L16 15.8 C15.7 16.6 15.1 17 14.2 17 Z" fill="none" stroke="#1238d0" stroke-width="2" stroke-linejoin="round"/></svg>
<svg style="left:548.00px;top:464.30px;transform:rotate(180deg);" width="11.80" height="11.00" viewBox="0 0 19 18.5"><rect x="0.4" y="8" width="2.7" height="9.4" fill="#1238d0"/><path d="M6.6 17 V8.8 L10.4 2.4 C11.9 2.2 12.6 3.6 12 5.2 L11.3 7.8 H16.3 C17.6 7.8 18.3 9 17.9 10.2 L16 15.8 C15.7 16.6 15.1 17 14.2 17 Z" fill="none" stroke="#1238d0" stroke-width="2" stroke-linejoin="round"/></svg>
<div class="b" style="left:952.10px;top:449.90px;width:26.60px;height:26.60px;background:#fcfcfc;border-radius:50%"></div>
<svg style="left:930px;top:440px" width="60" height="60" viewBox="0 0 517 517"><path d="M243 210 L322 167 L385 192 L316 240 Z" fill="none" stroke="#2a5ae0" stroke-width="8.5" stroke-linejoin="round"/><path d="M284 232 V290 M287 250 C300 285 352 280 376 243 V198" fill="none" stroke="#2a5ae0" stroke-width="8.5" stroke-linejoin="round" stroke-linecap="round"/></svg>
<div class="b" style="left:948.60px;top:447.80px;width:16.20px;height:16.20px;background:#3f8f1d;border-radius:50%"></div>
<div class="b" style="left:935.20px;top:473.70px;width:48.20px;height:15.60px;background:#f8f8f8;border-radius:2px;box-shadow:0 0 1.5px rgba(0,0,0,.12)"></div>
<span class="t" style="left:423.50px;top:466.88px;font-size:7.1px;line-height:9.23px;color:#6a6f7c;letter-spacing:0.189px;">Are these matches relevant?</span>
<span class="t" style="left:954.70px;top:451.22px;font-size:7.2px;line-height:9.36px;color:#fff;font-weight:700;">1</span>
<span class="t" style="left:939.90px;top:478.24px;font-size:6.4px;line-height:8.32px;color:#444;letter-spacing:-0.138px;">Show desktop</span>
<svg style="left:976.30px;top:489.20px;" width="3.20" height="2.00" viewBox="0 0 8 5"><path d="M0 0 L4 5 L8 0 Z" fill="#6a6a6a"/></svg>
</div></div>
<div id="rim"></div>
</body></html>
